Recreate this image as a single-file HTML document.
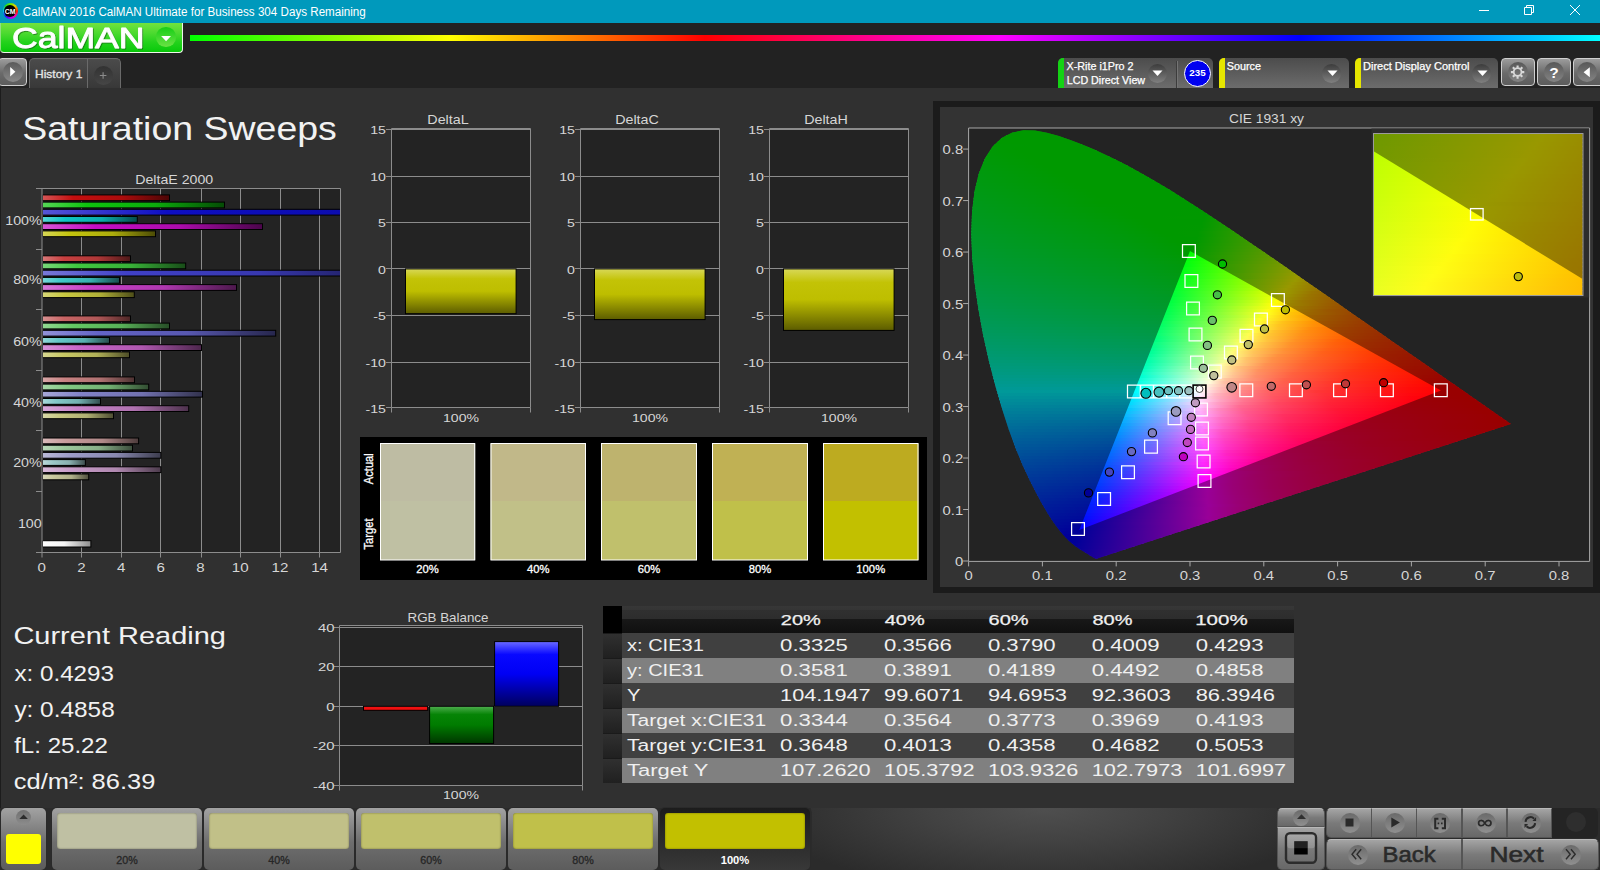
<!DOCTYPE html>
<html lang="en"><head><meta charset="utf-8"><title>CalMAN 2016 - Saturation Sweeps</title>
<style>
html,body{margin:0;padding:0;overflow:hidden}
body{width:1600px;height:870px;overflow:hidden;background:#303030;position:relative;font-family:"Liberation Sans",sans-serif}
.a{position:absolute;box-sizing:border-box}
#titlebar{left:0;top:0;width:1600px;height:23px;background:#0099bc}
#ticon{left:2.5px;top:3.2px;width:15.4px;height:15.4px;border-radius:50%;background:conic-gradient(#6e0 0,#ec0 12%,#f20 25%,#f0a 37%,#a0f 50%,#20f 62%,#0cf 75%,#2d2 88%,#6e0 100%)}
#ticon b{position:absolute;left:1.6px;top:1.6px;width:12.2px;height:12.2px;border-radius:50%;background:#000}
#band{left:0;top:23px;width:1600px;height:65px;background:#222}
#edge{left:0;top:88px;width:1px;height:782px;background:#1c1c1c}
#logo{left:0;top:23px;width:183px;height:30px;border-radius:0 0 4px 4px;background:linear-gradient(#72e23e 0%,#4cda30 35%,#24d21c 65%,#10cc10 90%,#06c406 100%);border:1px solid #eef6ea;border-top:0;border-left-color:#8fe080}
#logo i{left:155.4px;top:4.3px;width:19.6px;height:19.6px;border-radius:50%;background:linear-gradient(#16ce16,#6ae244)}
#rainbow{left:189.7px;top:35px;width:1410.3px;height:6px;background:linear-gradient(90deg,#0f0 0%,#ff0 18.5%,#f00 36.5%,#f0f 57.4%,#00f 78.7%,#0ff 100%)}
.btn{border:1px solid #cfcfcf;border-radius:4px;background:linear-gradient(#9c9c9c,#6a6a6a 55%,#5c5c5c)}
.btn i{position:absolute;border-radius:50%;background:linear-gradient(#585858,#848484)}
#play{left:-2px;top:58px;width:29px;height:28px}
#play i{left:3.6px;top:3px;width:20px;height:20px;background:linear-gradient(#5a5a5a,#8a8a8a)}
#tab{left:29px;top:58px;width:92px;height:30px;border:1px solid #6a6a6a;border-bottom:0;border-radius:5px 5px 0 0;background:linear-gradient(#4b4b4b,#383838)}
#tab b{position:absolute;left:57px;top:0;width:1px;height:29px;background:#6a6a6a}
#tab i{position:absolute;left:63.5px;top:6.5px;width:19.5px;height:19.5px;border-radius:50%;background:linear-gradient(#323232,#464646)}
.dd{top:58px;height:30px;border-radius:5px 5px 0 0;background:linear-gradient(#4c4c4c,#6c6c6c);overflow:hidden}
.dd u{position:absolute;left:0;top:0;width:5.5px;height:30px}
.dd i{position:absolute;top:5.5px;width:19px;height:19px;border-radius:50%;background:linear-gradient(#3c3c3c,#808080)}
.dd s{position:absolute;top:3px;width:1px;height:27px;background:#3c3c3c;box-shadow:1px 0 0 #747474}
#c235{left:1184px;top:60px;width:27px;height:27px;border-radius:50%;background:#0000f0;border:1.5px solid #fff}
.tb{top:58px;height:28px;width:34px}
.tb i{left:6px;top:3px;width:20px;height:20px}

#tbl{left:603px;top:606px;width:691px;height:177px;overflow:hidden}
.th{left:19px;top:0;width:672px;height:27px;background:linear-gradient(#373737 0,#353535 13%,#303030 14%,#2d2d2d 47%,#181818 48%,#101010 100%)}
.tr{left:19px;width:672px;height:25px}
.od{background:#404040}.ev{background:#808080}
.tc0{left:0;top:0;width:19px;height:27px;background:#000}
.tcr{left:0;width:19px;height:25px;background:linear-gradient(#303030,#202020);border-top:1px solid #1a1a1a}

#bbar{left:0;top:808px;width:1600px;height:62px;background:#2b2b2b}
#bbar2{left:811px;top:808px;width:466px;height:62px;background:radial-gradient(ellipse 62% 135% at 50% 0,#4f4f4f 0,#424242 40%,#2b2b2b 100%)}
.bb{top:808px;height:62px;border-radius:5px;background:linear-gradient(#a2a2a2,#6e6e6e 55%,#5c5c5c);box-shadow:0 0 0 1px #2a2a2a}
.bb u{position:absolute;left:5px;top:5px;right:5px;height:36px;border-radius:3px;box-shadow:inset 0 0 2px rgba(0,0,0,.45)}
.bsel{background:linear-gradient(#1c1c1c,#383838)}
.rc{position:absolute;border-radius:50%;background:linear-gradient(#6a6a6a,#909090)}
.sb{background:linear-gradient(#a4a4a4,#7a7a7a 50%,#686868);border:1px solid #555;border-top-color:#b8b8b8}

#app{position:relative;width:1600px;height:870px;overflow:hidden}
#ov{position:absolute;left:0;top:0;width:1600px;height:870px;font-family:"Liberation Sans",sans-serif}
#ov text{white-space:pre}
</style></head>
<body>
<div id="app">
<div id="titlebar" class="a"><div id="ticon" class="a"><b></b></div></div>
<div id="band" class="a"></div>
<div id="edge" class="a"></div>
<div id="logo" class="a"><i class="a"></i></div>
<div id="rainbow" class="a"></div>
<div id="play" class="a btn"><i></i></div>
<div id="tab" class="a"><b></b><i></i></div>
<div class="a dd" style="left:1058px;width:155px"><u style="background:#14d214"></u><i style="left:90px"></i><s style="left:118px"></s></div>
<div id="c235" class="a"></div>
<div class="a dd" style="left:1219px;width:130px"><u style="background:#e6e600"></u><i style="left:103px"></i></div>
<div class="a dd" style="left:1355px;width:143px"><u style="background:#e6e600"></u><i style="left:117px"></i></div>
<div class="a btn tb" style="left:1501px"><i></i></div>
<div class="a btn tb" style="left:1537px"><i></i></div>
<div class="a btn tb" style="left:1573px"><i style="left:3px"></i></div>
<div id="tbl" class="a">
<div class="a th"></div>
<div class="a tr od" style="top:27px"></div>
<div class="a tr ev" style="top:52px"></div>
<div class="a tr od" style="top:77px"></div>
<div class="a tr ev" style="top:102px"></div>
<div class="a tr od" style="top:127px"></div>
<div class="a tr ev" style="top:152px"></div>
<div class="a tc0"></div>
<div class="a tcr" style="top:27px"></div>
<div class="a tcr" style="top:52px"></div>
<div class="a tcr" style="top:77px"></div>
<div class="a tcr" style="top:102px"></div>
<div class="a tcr" style="top:127px"></div>
<div class="a tcr" style="top:152px"></div>
</div>
<div id="bbar" class="a"></div>
<div id="bbar2" class="a"></div>
<div class="a" style="left:0;top:808px;width:812px;height:62px;background:#2b2b2b;border-radius:0 5px 0 0"></div>
<div class="a bb" style="left:1px;width:45px"><i class="rc" style="left:15px;top:2px;width:15px;height:15px;background:linear-gradient(#707070,#8c8c8c)"></i><b class="a" style="left:5px;top:26px;width:35px;height:30px;border-radius:3px;background:#ff0"></b></div>
<div class="a bb" style="left:52px;width:150px"><u style="background:#bfc0a3"></u></div>
<div class="a bb" style="left:204px;width:150px"><u style="background:#c1c088"></u></div>
<div class="a bb" style="left:356px;width:150px"><u style="background:#c0c06c"></u></div>
<div class="a bb" style="left:508px;width:150px"><u style="background:#c0c04a"></u></div>
<div class="a bb bsel" style="left:660px;width:150px"><u style="background:#c2c000"></u></div>
<div class="a sb" style="left:1277px;top:808px;width:48px;height:19px;border-radius:5px 5px 0 0"><i class="rc" style="left:15px;top:1px;width:16px;height:16px"></i></div>
<div class="a sb" style="left:1277px;top:827px;width:48px;height:43px;border-radius:0 0 5px 5px"></div>
<div class="a sb" style="left:1326px;top:808px;width:45.6px;height:30px;border-radius:5px 0 0 5px"><i class="rc" style="left:13px;top:4px;width:20px;height:20px"></i></div>
<div class="a sb" style="left:1371.2px;top:808px;width:45.6px;height:30px;border-radius:0"><i class="rc" style="left:13px;top:4px;width:20px;height:20px"></i></div>
<div class="a sb" style="left:1416.4px;top:808px;width:45.6px;height:30px;border-radius:0"><i class="rc" style="left:13px;top:4px;width:20px;height:20px"></i></div>
<div class="a sb" style="left:1461.6px;top:808px;width:45.6px;height:30px;border-radius:0"><i class="rc" style="left:13px;top:4px;width:20px;height:20px"></i></div>
<div class="a sb" style="left:1506.8px;top:808px;width:45.2px;height:30px;border-radius:0"><i class="rc" style="left:13px;top:4px;width:20px;height:20px"></i></div>
<div class="a" style="left:1552px;top:808px;width:46px;height:30px;background:#242424;border-radius:0 5px 5px 0"><i class="rc" style="left:14px;top:4px;width:20px;height:20px;background:#2e2e2e"></i></div>
<div class="a sb" style="left:1326px;top:839px;width:136px;height:31px;border-radius:5px 0 0 5px"><i class="rc" style="left:21px;top:5px;width:20px;height:20px"></i></div>
<div class="a sb" style="left:1462px;top:839px;width:137px;height:31px;border-radius:0 5px 5px 0"><i class="rc" style="left:98px;top:5px;width:20px;height:20px"></i></div>
<svg id="ov" width="1600" height="870" viewBox="0 0 1600 870">
<defs>
<clipPath id="dec"><rect x="42" y="188.5" width="299" height="364"/></clipPath>
<linearGradient id="e00" gradientUnits="userSpaceOnUse" x1="42.5" x2="170"><stop offset="0" stop-color="#d65656"/><stop offset=".24" stop-color="#c40e0e"/><stop offset=".62" stop-color="#ac0c0c"/><stop offset="1" stop-color="#4a0505"/></linearGradient>
<linearGradient id="e01" gradientUnits="userSpaceOnUse" x1="42.5" x2="225"><stop offset="0" stop-color="#56d656"/><stop offset=".24" stop-color="#0ec40e"/><stop offset=".62" stop-color="#0cac0c"/><stop offset="1" stop-color="#054a05"/></linearGradient>
<linearGradient id="e02" gradientUnits="userSpaceOnUse" x1="42.5" x2="560.6"><stop offset="0" stop-color="#5656d6"/><stop offset=".24" stop-color="#0e0ec4"/><stop offset=".62" stop-color="#0c0cac"/><stop offset="1" stop-color="#05054a"/></linearGradient>
<linearGradient id="e03" gradientUnits="userSpaceOnUse" x1="42.5" x2="137.8"><stop offset="0" stop-color="#56d6d6"/><stop offset=".24" stop-color="#0ec4c4"/><stop offset=".62" stop-color="#0cacac"/><stop offset="1" stop-color="#054a4a"/></linearGradient>
<linearGradient id="e04" gradientUnits="userSpaceOnUse" x1="42.5" x2="263"><stop offset="0" stop-color="#d656d6"/><stop offset=".24" stop-color="#c40ec4"/><stop offset=".62" stop-color="#ac0cac"/><stop offset="1" stop-color="#4a054a"/></linearGradient>
<linearGradient id="e05" gradientUnits="userSpaceOnUse" x1="42.5" x2="156"><stop offset="0" stop-color="#d6d656"/><stop offset=".24" stop-color="#c4c40e"/><stop offset=".62" stop-color="#acac0c"/><stop offset="1" stop-color="#4a4a05"/></linearGradient>
<linearGradient id="e10" gradientUnits="userSpaceOnUse" x1="42.5" x2="131"><stop offset="0" stop-color="#d87979"/><stop offset=".24" stop-color="#c84040"/><stop offset=".62" stop-color="#b03838"/><stop offset="1" stop-color="#4c1818"/></linearGradient>
<linearGradient id="e11" gradientUnits="userSpaceOnUse" x1="42.5" x2="186.2"><stop offset="0" stop-color="#79d879"/><stop offset=".24" stop-color="#40c840"/><stop offset=".62" stop-color="#38b038"/><stop offset="1" stop-color="#184c18"/></linearGradient>
<linearGradient id="e12" gradientUnits="userSpaceOnUse" x1="42.5" x2="392.6"><stop offset="0" stop-color="#7979d8"/><stop offset=".24" stop-color="#4040c8"/><stop offset=".62" stop-color="#3838b0"/><stop offset="1" stop-color="#18184c"/></linearGradient>
<linearGradient id="e13" gradientUnits="userSpaceOnUse" x1="42.5" x2="120"><stop offset="0" stop-color="#79d8d8"/><stop offset=".24" stop-color="#40c8c8"/><stop offset=".62" stop-color="#38b0b0"/><stop offset="1" stop-color="#184c4c"/></linearGradient>
<linearGradient id="e14" gradientUnits="userSpaceOnUse" x1="42.5" x2="237"><stop offset="0" stop-color="#d879d8"/><stop offset=".24" stop-color="#c840c8"/><stop offset=".62" stop-color="#b038b0"/><stop offset="1" stop-color="#4c184c"/></linearGradient>
<linearGradient id="e15" gradientUnits="userSpaceOnUse" x1="42.5" x2="134.8"><stop offset="0" stop-color="#d8d879"/><stop offset=".24" stop-color="#c8c840"/><stop offset=".62" stop-color="#b0b038"/><stop offset="1" stop-color="#4c4c18"/></linearGradient>
<linearGradient id="e20" gradientUnits="userSpaceOnUse" x1="42.5" x2="131"><stop offset="0" stop-color="#d89292"/><stop offset=".24" stop-color="#c86464"/><stop offset=".62" stop-color="#b05858"/><stop offset="1" stop-color="#4c2626"/></linearGradient>
<linearGradient id="e21" gradientUnits="userSpaceOnUse" x1="42.5" x2="170"><stop offset="0" stop-color="#92d892"/><stop offset=".24" stop-color="#64c864"/><stop offset=".62" stop-color="#58b058"/><stop offset="1" stop-color="#264c26"/></linearGradient>
<linearGradient id="e22" gradientUnits="userSpaceOnUse" x1="42.5" x2="276.2"><stop offset="0" stop-color="#9292d8"/><stop offset=".24" stop-color="#6464c8"/><stop offset=".62" stop-color="#5858b0"/><stop offset="1" stop-color="#26264c"/></linearGradient>
<linearGradient id="e23" gradientUnits="userSpaceOnUse" x1="42.5" x2="110"><stop offset="0" stop-color="#92d8d8"/><stop offset=".24" stop-color="#64c8c8"/><stop offset=".62" stop-color="#58b0b0"/><stop offset="1" stop-color="#264c4c"/></linearGradient>
<linearGradient id="e24" gradientUnits="userSpaceOnUse" x1="42.5" x2="202"><stop offset="0" stop-color="#d892d8"/><stop offset=".24" stop-color="#c864c8"/><stop offset=".62" stop-color="#b058b0"/><stop offset="1" stop-color="#4c264c"/></linearGradient>
<linearGradient id="e25" gradientUnits="userSpaceOnUse" x1="42.5" x2="130"><stop offset="0" stop-color="#d8d892"/><stop offset=".24" stop-color="#c8c864"/><stop offset=".62" stop-color="#b0b058"/><stop offset="1" stop-color="#4c4c26"/></linearGradient>
<linearGradient id="e30" gradientUnits="userSpaceOnUse" x1="42.5" x2="135"><stop offset="0" stop-color="#d8a8a8"/><stop offset=".24" stop-color="#c88282"/><stop offset=".62" stop-color="#b07272"/><stop offset="1" stop-color="#4c3131"/></linearGradient>
<linearGradient id="e31" gradientUnits="userSpaceOnUse" x1="42.5" x2="149.2"><stop offset="0" stop-color="#a8d8a8"/><stop offset=".24" stop-color="#82c882"/><stop offset=".62" stop-color="#72b072"/><stop offset="1" stop-color="#314c31"/></linearGradient>
<linearGradient id="e32" gradientUnits="userSpaceOnUse" x1="42.5" x2="203"><stop offset="0" stop-color="#a8a8d8"/><stop offset=".24" stop-color="#8282c8"/><stop offset=".62" stop-color="#7272b0"/><stop offset="1" stop-color="#31314c"/></linearGradient>
<linearGradient id="e33" gradientUnits="userSpaceOnUse" x1="42.5" x2="101"><stop offset="0" stop-color="#a8d8d8"/><stop offset=".24" stop-color="#82c8c8"/><stop offset=".62" stop-color="#72b0b0"/><stop offset="1" stop-color="#314c4c"/></linearGradient>
<linearGradient id="e34" gradientUnits="userSpaceOnUse" x1="42.5" x2="189.2"><stop offset="0" stop-color="#d8a8d8"/><stop offset=".24" stop-color="#c882c8"/><stop offset=".62" stop-color="#b072b0"/><stop offset="1" stop-color="#4c314c"/></linearGradient>
<linearGradient id="e35" gradientUnits="userSpaceOnUse" x1="42.5" x2="114"><stop offset="0" stop-color="#d8d8a8"/><stop offset=".24" stop-color="#c8c882"/><stop offset=".62" stop-color="#b0b072"/><stop offset="1" stop-color="#4c4c31"/></linearGradient>
<linearGradient id="e40" gradientUnits="userSpaceOnUse" x1="42.5" x2="139.1"><stop offset="0" stop-color="#d8baba"/><stop offset=".24" stop-color="#c89c9c"/><stop offset=".62" stop-color="#b08989"/><stop offset="1" stop-color="#4c3b3b"/></linearGradient>
<linearGradient id="e41" gradientUnits="userSpaceOnUse" x1="42.5" x2="133"><stop offset="0" stop-color="#bad8ba"/><stop offset=".24" stop-color="#9cc89c"/><stop offset=".62" stop-color="#89b089"/><stop offset="1" stop-color="#3b4c3b"/></linearGradient>
<linearGradient id="e42" gradientUnits="userSpaceOnUse" x1="42.5" x2="161.4"><stop offset="0" stop-color="#babad8"/><stop offset=".24" stop-color="#9c9cc8"/><stop offset=".62" stop-color="#8989b0"/><stop offset="1" stop-color="#3b3b4c"/></linearGradient>
<linearGradient id="e43" gradientUnits="userSpaceOnUse" x1="42.5" x2="85.9"><stop offset="0" stop-color="#bad8d8"/><stop offset=".24" stop-color="#9cc8c8"/><stop offset=".62" stop-color="#89b0b0"/><stop offset="1" stop-color="#3b4c4c"/></linearGradient>
<linearGradient id="e44" gradientUnits="userSpaceOnUse" x1="42.5" x2="161.4"><stop offset="0" stop-color="#d8bad8"/><stop offset=".24" stop-color="#c89cc8"/><stop offset=".62" stop-color="#b089b0"/><stop offset="1" stop-color="#4c3b4c"/></linearGradient>
<linearGradient id="e45" gradientUnits="userSpaceOnUse" x1="42.5" x2="89.2"><stop offset="0" stop-color="#d8d8ba"/><stop offset=".24" stop-color="#c8c89c"/><stop offset=".62" stop-color="#b0b089"/><stop offset="1" stop-color="#4c4c3b"/></linearGradient>
<linearGradient id="ew" gradientUnits="userSpaceOnUse" x1="42" x2="91.4"><stop offset="0" stop-color="#fff"/><stop offset=".45" stop-color="#f4f4f4"/><stop offset="1" stop-color="#8c8c8c"/></linearGradient>
<linearGradient id="yb" x1="0" y1="0" x2="0" y2="1"><stop offset="0" stop-color="#d8d858"/><stop offset=".22" stop-color="#c3c306"/><stop offset=".5" stop-color="#bebe00"/><stop offset="1" stop-color="#5c5c00"/></linearGradient>
<linearGradient id="gb" x1="0" y1="0" x2="0" y2="1"><stop offset="0" stop-color="#6a6aff"/><stop offset=".2" stop-color="#0808ff"/><stop offset=".5" stop-color="#0000f4"/><stop offset="1" stop-color="#00005c"/></linearGradient>
<linearGradient id="gg" x1="0" y1="0" x2="0" y2="1"><stop offset="0" stop-color="#4fae4f"/><stop offset=".22" stop-color="#068406"/><stop offset=".5" stop-color="#007c00"/><stop offset="1" stop-color="#003600"/></linearGradient>
<clipPath id="loc"><path d="M1097.09 558.44L1097.07 558.43L1097.04 558.42L1096.99 558.44L1096.93 558.46L1096.86 558.46L1096.79 558.45L1096.72 558.45L1096.65 558.47L1096.59 558.5L1096.52 558.52L1096.45 558.53L1096.35 558.53L1096.23 558.53L1096.09 558.52L1095.96 558.52L1095.83 558.52L1095.68 558.51L1095.52 558.49L1095.35 558.45L1095.1 558.36L1094.79 558.25L1094.46 558.1L1094.1 557.91L1093.69 557.7L1093.23 557.44L1092.69 557.13L1092.09 556.78L1091.44 556.37L1090.73 555.9L1089.94 555.39L1089.05 554.83L1088.05 554.21L1086.91 553.52L1085.63 552.73L1084.2 551.86L1082.64 550.9L1080.94 549.84L1079.07 548.63L1077.03 547.24L1074.84 545.66L1072.51 543.85L1069.97 541.68L1067.13 538.95L1063.87 535.46L1060.2 531.15L1056.2 525.97L1051.83 519.73L1047.02 512.2L1041.76 503.15L1035.97 492.46L1029.62 479.98L1022.8 465.43L1015.83 448.68L1008.94 429.76L1002.1 408.64L995.31 385.44L988.89 360.64L983.14 334.9L978.33 308.84L974.63 282.9L972.2 257.75L971.28 234.05L972.03 211.9L974.5 191.53L978.84 173.53L985.02 158.32L992.82 146.29L1002.05 137.78L1012.38 132.6L1023.44 130.34L1034.98 130.61L1046.84 132.73L1058.89 136.04L1070.96 140.17L1082.78 144.77L1094.24 149.6L1105.42 154.66L1116.43 159.99L1127.29 165.57L1138.06 171.39L1148.77 177.44L1159.43 183.69L1170.04 190.12L1180.62 196.7L1191.18 203.42L1201.74 210.26L1212.3 217.2L1222.85 224.23L1233.4 231.32L1243.95 238.47L1254.49 245.66L1265 252.86L1275.49 260.08L1285.93 267.29L1296.32 274.49L1306.63 281.66L1316.86 288.78L1326.98 295.83L1336.97 302.81L1346.81 309.68L1356.49 316.42L1365.99 323.04L1375.26 329.49L1384.29 335.78L1393.06 341.88L1401.55 347.81L1409.67 353.49L1417.33 358.84L1424.52 363.85L1431.35 368.61L1437.89 373.17L1444.07 377.47L1449.8 381.45L1455.06 385.1L1459.93 388.48L1464.43 391.62L1468.56 394.5L1472.35 397.14L1475.79 399.55L1478.93 401.74L1481.8 403.74L1484.42 405.56L1486.82 407.23L1489.01 408.75L1491.04 410.17L1492.95 411.5L1494.72 412.73L1496.36 413.88L1497.86 414.93L1499.25 415.9L1500.52 416.78L1501.67 417.59L1502.69 418.3L1503.59 418.92L1504.38 419.48L1505.11 419.98L1505.76 420.44L1506.35 420.85L1506.87 421.21L1507.32 421.53L1507.69 421.79L1508 422.01L1508.28 422.21L1508.56 422.4L1508.81 422.57L1509.04 422.73L1509.25 422.88L1509.45 423.02L1509.66 423.17L1509.86 423.31L1510.06 423.45L1510.24 423.58L1510.4 423.68L1510.5 423.76L1510.58 423.81L1510.65 423.86L1510.7 423.9L1510.75 423.93L1510.79 423.96L1510.8 423.97L1510.8 423.97Z"/></clipPath>
<linearGradient id="c0" gradientUnits="userSpaceOnUse" x1="1015.5" x2="1042.5"><stop offset="0" stop-color="#00ff00"/><stop offset="1" stop-color="#00ff00"/></linearGradient>
<linearGradient id="c1" gradientUnits="userSpaceOnUse" x1="1005.5" x2="1054.5"><stop offset="0" stop-color="#00ff00"/><stop offset="1" stop-color="#00ff00"/></linearGradient>
<linearGradient id="c2" gradientUnits="userSpaceOnUse" x1="1000.5" x2="1063.5"><stop offset="0" stop-color="#00ff00"/><stop offset="1" stop-color="#00ff00"/></linearGradient>
<linearGradient id="c3" gradientUnits="userSpaceOnUse" x1="996.5" x2="1072.5"><stop offset="0" stop-color="#00ff00"/><stop offset="1" stop-color="#00ff00"/></linearGradient>
<linearGradient id="c4" gradientUnits="userSpaceOnUse" x1="993.5" x2="1081.5"><stop offset="0" stop-color="#00ff01"/><stop offset="1" stop-color="#00ff00"/></linearGradient>
<linearGradient id="c5" gradientUnits="userSpaceOnUse" x1="990.5" x2="1088.5"><stop offset="0" stop-color="#00ff04"/><stop offset=".55" stop-color="#00ff00"/><stop offset="1" stop-color="#00ff00"/></linearGradient>
<linearGradient id="c6" gradientUnits="userSpaceOnUse" x1="988.5" x2="1096.5"><stop offset="0" stop-color="#00ff06"/><stop offset=".31" stop-color="#00ff00"/><stop offset="1" stop-color="#00ff00"/></linearGradient>
<linearGradient id="c7" gradientUnits="userSpaceOnUse" x1="986.5" x2="1101.5"><stop offset="0" stop-color="#00ff09"/><stop offset=".33" stop-color="#00ff00"/><stop offset="1" stop-color="#00ff00"/></linearGradient>
<linearGradient id="c8" gradientUnits="userSpaceOnUse" x1="984.5" x2="1109.5"><stop offset="0" stop-color="#00ff0b"/><stop offset=".35" stop-color="#00ff00"/><stop offset="1" stop-color="#00ff00"/></linearGradient>
<linearGradient id="c9" gradientUnits="userSpaceOnUse" x1="983.5" x2="1115.5"><stop offset="0" stop-color="#00ff0d"/><stop offset=".37" stop-color="#00ff00"/><stop offset="1" stop-color="#00ff00"/></linearGradient>
<linearGradient id="c10" gradientUnits="userSpaceOnUse" x1="981.5" x2="1121.5"><stop offset="0" stop-color="#00ff0f"/><stop offset=".41" stop-color="#00ff00"/><stop offset="1" stop-color="#00ff00"/></linearGradient>
<linearGradient id="c11" gradientUnits="userSpaceOnUse" x1="980.5" x2="1127.5"><stop offset="0" stop-color="#00ff11"/><stop offset=".42" stop-color="#00ff00"/><stop offset="1" stop-color="#00ff00"/></linearGradient>
<linearGradient id="c12" gradientUnits="userSpaceOnUse" x1="978.5" x2="1132.5"><stop offset="0" stop-color="#00ff14"/><stop offset=".45" stop-color="#00ff00"/><stop offset="1" stop-color="#00ff00"/></linearGradient>
<linearGradient id="c13" gradientUnits="userSpaceOnUse" x1="977.5" x2="1138.5"><stop offset="0" stop-color="#00ff16"/><stop offset=".47" stop-color="#00ff00"/><stop offset="1" stop-color="#00ff00"/></linearGradient>
<linearGradient id="c14" gradientUnits="userSpaceOnUse" x1="976.5" x2="1143.5"><stop offset="0" stop-color="#00ff18"/><stop offset=".49" stop-color="#00ff00"/><stop offset="1" stop-color="#00ff00"/></linearGradient>
<linearGradient id="c15" gradientUnits="userSpaceOnUse" x1="975.5" x2="1148.5"><stop offset="0" stop-color="#00ff1a"/><stop offset=".51" stop-color="#00ff00"/><stop offset="1" stop-color="#00ff00"/></linearGradient>
<linearGradient id="c16" gradientUnits="userSpaceOnUse" x1="975.5" x2="1154.5"><stop offset="0" stop-color="#00ff1b"/><stop offset=".53" stop-color="#00ff00"/><stop offset="1" stop-color="#00ff00"/></linearGradient>
<linearGradient id="c17" gradientUnits="userSpaceOnUse" x1="974.5" x2="1159.5"><stop offset="0" stop-color="#00ff1d"/><stop offset=".54" stop-color="#00ff00"/><stop offset="1" stop-color="#00ff00"/></linearGradient>
<linearGradient id="c18" gradientUnits="userSpaceOnUse" x1="973.5" x2="1164.5"><stop offset="0" stop-color="#00ff1f"/><stop offset=".56" stop-color="#00ff00"/><stop offset="1" stop-color="#00ff00"/></linearGradient>
<linearGradient id="c19" gradientUnits="userSpaceOnUse" x1="973.5" x2="1169.5"><stop offset="0" stop-color="#00ff21"/><stop offset=".57" stop-color="#00ff00"/><stop offset="1" stop-color="#00ff00"/></linearGradient>
<linearGradient id="c20" gradientUnits="userSpaceOnUse" x1="972.5" x2="1174.5"><stop offset="0" stop-color="#00ff23"/><stop offset=".59" stop-color="#00ff00"/><stop offset="1" stop-color="#00ff00"/></linearGradient>
<linearGradient id="c21" gradientUnits="userSpaceOnUse" x1="972.5" x2="1179.5"><stop offset="0" stop-color="#00ff25"/><stop offset=".6" stop-color="#00ff00"/><stop offset="1" stop-color="#00ff00"/></linearGradient>
<linearGradient id="c22" gradientUnits="userSpaceOnUse" x1="971.5" x2="1183.5"><stop offset="0" stop-color="#00ff27"/><stop offset=".61" stop-color="#00ff00"/><stop offset="1" stop-color="#00ff00"/></linearGradient>
<linearGradient id="c23" gradientUnits="userSpaceOnUse" x1="971.5" x2="1187.5"><stop offset="0" stop-color="#00ff29"/><stop offset=".62" stop-color="#00ff00"/><stop offset="1" stop-color="#00ff00"/></linearGradient>
<linearGradient id="c24" gradientUnits="userSpaceOnUse" x1="971.5" x2="1193.5"><stop offset="0" stop-color="#00ff2b"/><stop offset=".58" stop-color="#00ff01"/><stop offset="1" stop-color="#00ff00"/></linearGradient>
<linearGradient id="c25" gradientUnits="userSpaceOnUse" x1="971.5" x2="1198.5"><stop offset="0" stop-color="#00ff2d"/><stop offset=".58" stop-color="#00ff02"/><stop offset="1" stop-color="#00ff00"/></linearGradient>
<linearGradient id="c26" gradientUnits="userSpaceOnUse" x1="970.5" x2="1202.5"><stop offset="0" stop-color="#00ff2f"/><stop offset=".59" stop-color="#00ff04"/><stop offset=".77" stop-color="#00ff00"/><stop offset="1" stop-color="#00ff00"/></linearGradient>
<linearGradient id="c27" gradientUnits="userSpaceOnUse" x1="970.5" x2="1207.5"><stop offset="0" stop-color="#00ff31"/><stop offset=".58" stop-color="#00ff05"/><stop offset=".69" stop-color="#00ff00"/><stop offset="1" stop-color="#02ff00"/><stop offset="1" stop-color="#04ff00"/></linearGradient>
<linearGradient id="c28" gradientUnits="userSpaceOnUse" x1="970.5" x2="1211.5"><stop offset="0" stop-color="#00ff33"/><stop offset=".59" stop-color="#00ff06"/><stop offset=".68" stop-color="#00ff00"/><stop offset=".98" stop-color="#02ff00"/><stop offset="1" stop-color="#0eff00"/></linearGradient>
<linearGradient id="c29" gradientUnits="userSpaceOnUse" x1="969.5" x2="1216.5"><stop offset="0" stop-color="#00ff35"/><stop offset=".58" stop-color="#00ff08"/><stop offset=".68" stop-color="#00ff00"/><stop offset=".95" stop-color="#03ff00"/><stop offset="1" stop-color="#18ff00"/></linearGradient>
<linearGradient id="c30" gradientUnits="userSpaceOnUse" x1="969.5" x2="1220.5"><stop offset="0" stop-color="#00ff37"/><stop offset=".58" stop-color="#00ff0a"/><stop offset=".7" stop-color="#00ff00"/><stop offset=".93" stop-color="#01ff00"/><stop offset="1" stop-color="#21ff00"/></linearGradient>
<linearGradient id="c31" gradientUnits="userSpaceOnUse" x1="969.5" x2="1224.5"><stop offset="0" stop-color="#00ff39"/><stop offset=".58" stop-color="#00ff0c"/><stop offset=".7" stop-color="#00ff00"/><stop offset=".91" stop-color="#01ff00"/><stop offset="1" stop-color="#2aff00"/></linearGradient>
<linearGradient id="c32" gradientUnits="userSpaceOnUse" x1="969.5" x2="1230.5"><stop offset="0" stop-color="#00ff3b"/><stop offset=".57" stop-color="#00ff0e"/><stop offset=".7" stop-color="#00ff00"/><stop offset=".89" stop-color="#02ff00"/><stop offset="1" stop-color="#37ff00"/></linearGradient>
<linearGradient id="c33" gradientUnits="userSpaceOnUse" x1="969.5" x2="1234.5"><stop offset="0" stop-color="#00ff3d"/><stop offset=".56" stop-color="#00ff10"/><stop offset=".71" stop-color="#00ff00"/><stop offset=".87" stop-color="#02ff00"/><stop offset="1" stop-color="#40ff00"/></linearGradient>
<linearGradient id="c34" gradientUnits="userSpaceOnUse" x1="969.5" x2="1238.5"><stop offset="0" stop-color="#00ff3f"/><stop offset=".56" stop-color="#00ff11"/><stop offset=".72" stop-color="#00ff00"/><stop offset=".85" stop-color="#03ff00"/><stop offset="1" stop-color="#4aff00"/></linearGradient>
<linearGradient id="c35" gradientUnits="userSpaceOnUse" x1="969.5" x2="1242.5"><stop offset="0" stop-color="#00ff42"/><stop offset=".56" stop-color="#00ff13"/><stop offset=".73" stop-color="#00ff00"/><stop offset=".84" stop-color="#03ff00"/><stop offset="1" stop-color="#53ff00"/></linearGradient>
<linearGradient id="c36" gradientUnits="userSpaceOnUse" x1="969.5" x2="1246.5"><stop offset="0" stop-color="#00ff44"/><stop offset=".55" stop-color="#00ff15"/><stop offset=".74" stop-color="#00ff00"/><stop offset=".82" stop-color="#01ff00"/><stop offset="1" stop-color="#5dff00"/></linearGradient>
<linearGradient id="c37" gradientUnits="userSpaceOnUse" x1="969.5" x2="1251.5"><stop offset="0" stop-color="#00ff46"/><stop offset=".54" stop-color="#00ff18"/><stop offset=".74" stop-color="#00ff00"/><stop offset=".8" stop-color="#02ff00"/><stop offset="1" stop-color="#69ff00"/></linearGradient>
<linearGradient id="c38" gradientUnits="userSpaceOnUse" x1="969.5" x2="1256.5"><stop offset="0" stop-color="#00ff48"/><stop offset=".54" stop-color="#00ff1a"/><stop offset=".75" stop-color="#00ff00"/><stop offset=".78" stop-color="#02ff00"/><stop offset="1" stop-color="#75ff00"/></linearGradient>
<linearGradient id="c39" gradientUnits="userSpaceOnUse" x1="969.5" x2="1260.5"><stop offset="0" stop-color="#00ff4a"/><stop offset=".53" stop-color="#00ff1c"/><stop offset=".76" stop-color="#00ff00"/><stop offset="1" stop-color="#80ff00"/></linearGradient>
<linearGradient id="c40" gradientUnits="userSpaceOnUse" x1="969.5" x2="1264.5"><stop offset="0" stop-color="#00ff4d"/><stop offset=".53" stop-color="#00ff1f"/><stop offset=".75" stop-color="#01ff00"/><stop offset="1" stop-color="#8cff00"/></linearGradient>
<linearGradient id="c41" gradientUnits="userSpaceOnUse" x1="970.5" x2="1269.5"><stop offset="0" stop-color="#00ff4f"/><stop offset=".52" stop-color="#00ff21"/><stop offset=".73" stop-color="#01ff03"/><stop offset=".88" stop-color="#57ff00"/><stop offset="1" stop-color="#99ff00"/></linearGradient>
<linearGradient id="c42" gradientUnits="userSpaceOnUse" x1="970.5" x2="1273.5"><stop offset="0" stop-color="#00ff51"/><stop offset=".51" stop-color="#00ff23"/><stop offset=".72" stop-color="#02ff07"/><stop offset=".78" stop-color="#28ff00"/><stop offset="1" stop-color="#a5ff00"/></linearGradient>
<linearGradient id="c43" gradientUnits="userSpaceOnUse" x1="970.5" x2="1277.5"><stop offset="0" stop-color="#00ff54"/><stop offset=".51" stop-color="#00ff26"/><stop offset=".71" stop-color="#02ff0b"/><stop offset=".79" stop-color="#32ff00"/><stop offset="1" stop-color="#b2ff00"/></linearGradient>
<linearGradient id="c44" gradientUnits="userSpaceOnUse" x1="970.5" x2="1282.5"><stop offset="0" stop-color="#00ff56"/><stop offset=".5" stop-color="#00ff29"/><stop offset=".69" stop-color="#03ff0f"/><stop offset=".79" stop-color="#3eff00"/><stop offset="1" stop-color="#c1ff00"/></linearGradient>
<linearGradient id="c45" gradientUnits="userSpaceOnUse" x1="971.5" x2="1286.5"><stop offset="0" stop-color="#00ff58"/><stop offset=".5" stop-color="#00ff2b"/><stop offset=".68" stop-color="#01ff13"/><stop offset=".79" stop-color="#4bff00"/><stop offset="1" stop-color="#cfff00"/></linearGradient>
<linearGradient id="c46" gradientUnits="userSpaceOnUse" x1="971.5" x2="1291.5"><stop offset="0" stop-color="#00ff5b"/><stop offset=".49" stop-color="#00ff2e"/><stop offset=".66" stop-color="#01ff16"/><stop offset=".8" stop-color="#58ff00"/><stop offset="1" stop-color="#dfff00"/></linearGradient>
<linearGradient id="c47" gradientUnits="userSpaceOnUse" x1="971.5" x2="1295.5"><stop offset="0" stop-color="#00ff5d"/><stop offset=".49" stop-color="#00ff30"/><stop offset=".65" stop-color="#02ff1a"/><stop offset=".81" stop-color="#67ff00"/><stop offset="1" stop-color="#eeff00"/></linearGradient>
<linearGradient id="c48" gradientUnits="userSpaceOnUse" x1="971.5" x2="1299.5"><stop offset="0" stop-color="#00ff60"/><stop offset=".48" stop-color="#00ff33"/><stop offset=".64" stop-color="#02ff1e"/><stop offset=".81" stop-color="#75ff00"/><stop offset="1" stop-color="#fdff00"/></linearGradient>
<linearGradient id="c49" gradientUnits="userSpaceOnUse" x1="972.5" x2="1303.5"><stop offset="0" stop-color="#00ff63"/><stop offset=".48" stop-color="#00ff36"/><stop offset=".63" stop-color="#03ff21"/><stop offset=".82" stop-color="#83ff00"/><stop offset=".98" stop-color="#fffd00"/><stop offset="1" stop-color="#fff100"/></linearGradient>
<linearGradient id="c50" gradientUnits="userSpaceOnUse" x1="972.5" x2="1308.5"><stop offset="0" stop-color="#00ff65"/><stop offset=".47" stop-color="#00ff39"/><stop offset=".61" stop-color="#01ff25"/><stop offset=".82" stop-color="#94ff00"/><stop offset=".96" stop-color="#fffe00"/><stop offset="1" stop-color="#ffe100"/></linearGradient>
<linearGradient id="c51" gradientUnits="userSpaceOnUse" x1="972.5" x2="1312.5"><stop offset="0" stop-color="#00ff68"/><stop offset=".46" stop-color="#00ff3c"/><stop offset=".6" stop-color="#01ff29"/><stop offset=".81" stop-color="#96ff01"/><stop offset=".94" stop-color="#fffc00"/><stop offset="1" stop-color="#ffd300"/></linearGradient>
<linearGradient id="c52" gradientUnits="userSpaceOnUse" x1="972.5" x2="1316.5"><stop offset="0" stop-color="#00ff6b"/><stop offset=".46" stop-color="#00ff3f"/><stop offset=".59" stop-color="#02ff2d"/><stop offset=".81" stop-color="#a1ff03"/><stop offset=".92" stop-color="#fffd00"/><stop offset="1" stop-color="#ffc700"/></linearGradient>
<linearGradient id="c53" gradientUnits="userSpaceOnUse" x1="973.5" x2="1320.5"><stop offset="0" stop-color="#00ff6d"/><stop offset=".46" stop-color="#00ff42"/><stop offset=".58" stop-color="#02ff31"/><stop offset=".81" stop-color="#adff05"/><stop offset=".85" stop-color="#ceff00"/><stop offset=".9" stop-color="#fffe00"/><stop offset=".99" stop-color="#ffc400"/><stop offset="1" stop-color="#ffbc00"/></linearGradient>
<linearGradient id="c54" gradientUnits="userSpaceOnUse" x1="973.5" x2="1325.5"><stop offset="0" stop-color="#00ff70"/><stop offset=".45" stop-color="#00ff45"/><stop offset=".57" stop-color="#03ff35"/><stop offset=".8" stop-color="#b7ff08"/><stop offset=".84" stop-color="#d9ff00"/><stop offset=".89" stop-color="#fffd00"/><stop offset=".96" stop-color="#ffc400"/><stop offset="1" stop-color="#ffaf00"/></linearGradient>
<linearGradient id="c55" gradientUnits="userSpaceOnUse" x1="974.5" x2="1329.5"><stop offset="0" stop-color="#00ff73"/><stop offset=".45" stop-color="#00ff48"/><stop offset=".56" stop-color="#00ff39"/><stop offset=".79" stop-color="#bcff0c"/><stop offset=".85" stop-color="#ecff00"/><stop offset=".87" stop-color="#fffe00"/><stop offset=".94" stop-color="#ffc400"/><stop offset="1" stop-color="#ffa500"/></linearGradient>
<linearGradient id="c56" gradientUnits="userSpaceOnUse" x1="974.5" x2="1333.5"><stop offset="0" stop-color="#00ff76"/><stop offset=".44" stop-color="#00ff4c"/><stop offset=".55" stop-color="#01ff3d"/><stop offset=".79" stop-color="#c4ff10"/><stop offset=".85" stop-color="#ffff00"/><stop offset=".92" stop-color="#ffc600"/><stop offset="1" stop-color="#ff9c00"/></linearGradient>
<linearGradient id="c57" gradientUnits="userSpaceOnUse" x1="975.5" x2="1338.5"><stop offset="0" stop-color="#00ff79"/><stop offset=".44" stop-color="#00ff4f"/><stop offset=".54" stop-color="#02ff41"/><stop offset=".78" stop-color="#cdff13"/><stop offset=".83" stop-color="#fffd03"/><stop offset=".9" stop-color="#ffc400"/><stop offset="1" stop-color="#ff9200"/></linearGradient>
<linearGradient id="c58" gradientUnits="userSpaceOnUse" x1="975.5" x2="1342.5"><stop offset="0" stop-color="#00ff7c"/><stop offset=".43" stop-color="#00ff53"/><stop offset=".53" stop-color="#02ff46"/><stop offset=".77" stop-color="#d3ff18"/><stop offset=".81" stop-color="#fffe0b"/><stop offset=".86" stop-color="#ffd800"/><stop offset=".95" stop-color="#ffa200"/><stop offset="1" stop-color="#ff8900"/></linearGradient>
<linearGradient id="c59" gradientUnits="userSpaceOnUse" x1="976.5" x2="1346.5"><stop offset="0" stop-color="#00ff7f"/><stop offset=".43" stop-color="#00ff56"/><stop offset=".52" stop-color="#03ff4a"/><stop offset=".75" stop-color="#d4ff1d"/><stop offset=".8" stop-color="#fffd11"/><stop offset=".86" stop-color="#ffc800"/><stop offset=".96" stop-color="#ff9300"/><stop offset="1" stop-color="#ff8100"/></linearGradient>
<linearGradient id="c60" gradientUnits="userSpaceOnUse" x1="976.5" x2="1350.5"><stop offset="0" stop-color="#00ff83"/><stop offset=".43" stop-color="#00ff5a"/><stop offset=".51" stop-color="#00ff4f"/><stop offset=".74" stop-color="#d7ff23"/><stop offset=".78" stop-color="#fffe18"/><stop offset=".85" stop-color="#ffc502"/><stop offset=".94" stop-color="#ff9000"/><stop offset="1" stop-color="#ff7a00"/></linearGradient>
<linearGradient id="c61" gradientUnits="userSpaceOnUse" x1="977.5" x2="1355.5"><stop offset="0" stop-color="#00ff86"/><stop offset=".42" stop-color="#00ff5d"/><stop offset=".5" stop-color="#01ff53"/><stop offset=".72" stop-color="#d6ff29"/><stop offset=".77" stop-color="#fffc1e"/><stop offset=".83" stop-color="#ffc308"/><stop offset=".88" stop-color="#ffa800"/><stop offset=".99" stop-color="#ff7600"/><stop offset="1" stop-color="#ff7200"/></linearGradient>
<linearGradient id="c62" gradientUnits="userSpaceOnUse" x1="977.5" x2="1360.5"><stop offset="0" stop-color="#00ff89"/><stop offset=".42" stop-color="#00ff61"/><stop offset=".49" stop-color="#02ff58"/><stop offset=".71" stop-color="#d4ff30"/><stop offset=".75" stop-color="#fffd25"/><stop offset=".81" stop-color="#ffc50f"/><stop offset=".87" stop-color="#ff9e00"/><stop offset=".99" stop-color="#ff6d00"/><stop offset="1" stop-color="#ff6a00"/></linearGradient>
<linearGradient id="c63" gradientUnits="userSpaceOnUse" x1="978.5" x2="1364.5"><stop offset="0" stop-color="#00ff8c"/><stop offset=".41" stop-color="#00ff65"/><stop offset=".48" stop-color="#02ff5c"/><stop offset=".69" stop-color="#d2ff36"/><stop offset=".73" stop-color="#fffe2c"/><stop offset=".8" stop-color="#ffc515"/><stop offset=".88" stop-color="#ff9300"/><stop offset="1" stop-color="#ff6400"/></linearGradient>
<linearGradient id="c64" gradientUnits="userSpaceOnUse" x1="978.5" x2="1367.5"><stop offset="0" stop-color="#00ff90"/><stop offset=".41" stop-color="#00ff69"/><stop offset=".47" stop-color="#03ff61"/><stop offset=".68" stop-color="#d3ff3c"/><stop offset=".72" stop-color="#fffc32"/><stop offset=".78" stop-color="#ffc31a"/><stop offset=".87" stop-color="#ff8e01"/><stop offset="1" stop-color="#ff5f00"/><stop offset="1" stop-color="#ff5e00"/></linearGradient>
<linearGradient id="c65" gradientUnits="userSpaceOnUse" x1="979.5" x2="1372.5"><stop offset="0" stop-color="#00ff93"/><stop offset=".41" stop-color="#00ff6d"/><stop offset=".46" stop-color="#00ff67"/><stop offset=".67" stop-color="#d7ff42"/><stop offset=".7" stop-color="#fffe39"/><stop offset=".76" stop-color="#ffc521"/><stop offset=".85" stop-color="#ff9008"/><stop offset=".9" stop-color="#ff7a00"/><stop offset="1" stop-color="#ff5800"/></linearGradient>
<linearGradient id="c66" gradientUnits="userSpaceOnUse" x1="979.5" x2="1377.5"><stop offset="0" stop-color="#00ff97"/><stop offset=".41" stop-color="#00ff72"/><stop offset=".45" stop-color="#01ff6c"/><stop offset=".65" stop-color="#d5ff49"/><stop offset=".69" stop-color="#fffc3f"/><stop offset=".75" stop-color="#ffc326"/><stop offset=".83" stop-color="#ff8e0c"/><stop offset=".89" stop-color="#ff7300"/><stop offset="1" stop-color="#ff5100"/></linearGradient>
<linearGradient id="c67" gradientUnits="userSpaceOnUse" x1="980.5" x2="1381.5"><stop offset="0" stop-color="#00ff9b"/><stop offset=".4" stop-color="#00ff76"/><stop offset=".44" stop-color="#02ff71"/><stop offset=".64" stop-color="#d4ff50"/><stop offset=".68" stop-color="#fffd47"/><stop offset=".73" stop-color="#ffc32c"/><stop offset=".81" stop-color="#ff8f12"/><stop offset=".9" stop-color="#ff6a00"/><stop offset="1" stop-color="#ff4c00"/></linearGradient>
<linearGradient id="c68" gradientUnits="userSpaceOnUse" x1="981.5" x2="1386.5"><stop offset="0" stop-color="#00ff9f"/><stop offset=".4" stop-color="#00ff7a"/><stop offset=".43" stop-color="#02ff76"/><stop offset=".62" stop-color="#d2ff57"/><stop offset=".66" stop-color="#fffe4f"/><stop offset=".71" stop-color="#ffc633"/><stop offset=".79" stop-color="#ff9118"/><stop offset=".9" stop-color="#ff6300"/><stop offset="1" stop-color="#ff4600"/></linearGradient>
<linearGradient id="c69" gradientUnits="userSpaceOnUse" x1="981.5" x2="1390.5"><stop offset="0" stop-color="#00ffa3"/><stop offset=".4" stop-color="#00ff7f"/><stop offset=".43" stop-color="#03ff7b"/><stop offset=".61" stop-color="#d3ff5e"/><stop offset=".65" stop-color="#fffc55"/><stop offset=".7" stop-color="#ffc438"/><stop offset=".78" stop-color="#ff8f1c"/><stop offset=".89" stop-color="#ff6001"/><stop offset="1" stop-color="#ff4100"/></linearGradient>
<linearGradient id="c70" gradientUnits="userSpaceOnUse" x1="982.5" x2="1395.5"><stop offset="0" stop-color="#00ffa7"/><stop offset=".4" stop-color="#00ff84"/><stop offset=".42" stop-color="#00ff81"/><stop offset=".6" stop-color="#d7ff64"/><stop offset=".63" stop-color="#fffe5d"/><stop offset=".69" stop-color="#ffc43e"/><stop offset=".76" stop-color="#ff9022"/><stop offset=".86" stop-color="#ff6107"/><stop offset=".92" stop-color="#ff5000"/><stop offset="1" stop-color="#ff3c00"/></linearGradient>
<linearGradient id="c71" gradientUnits="userSpaceOnUse" x1="982.5" x2="1399.5"><stop offset="0" stop-color="#00ffab"/><stop offset=".4" stop-color="#00ff89"/><stop offset=".41" stop-color="#04ff87"/><stop offset=".59" stop-color="#d2ff6c"/><stop offset=".62" stop-color="#ffff65"/><stop offset=".67" stop-color="#ffc646"/><stop offset=".74" stop-color="#ff9128"/><stop offset=".84" stop-color="#ff620c"/><stop offset=".91" stop-color="#ff4c00"/><stop offset="1" stop-color="#ff3700"/></linearGradient>
<linearGradient id="c72" gradientUnits="userSpaceOnUse" x1="983.5" x2="1403.5"><stop offset="0" stop-color="#00ffaf"/><stop offset=".4" stop-color="#00ff8d"/><stop offset=".41" stop-color="#08ff8c"/><stop offset=".57" stop-color="#cdff74"/><stop offset=".61" stop-color="#fffd6c"/><stop offset=".66" stop-color="#ffc44b"/><stop offset=".73" stop-color="#ff902d"/><stop offset=".83" stop-color="#ff6110"/><stop offset=".92" stop-color="#ff4600"/><stop offset="1" stop-color="#ff3300"/></linearGradient>
<linearGradient id="c73" gradientUnits="userSpaceOnUse" x1="983.5" x2="1407.5"><stop offset="0" stop-color="#00ffb3"/><stop offset=".4" stop-color="#02ff93"/><stop offset=".56" stop-color="#d1ff7b"/><stop offset=".59" stop-color="#fffe75"/><stop offset=".64" stop-color="#ffc653"/><stop offset=".71" stop-color="#ff9133"/><stop offset=".81" stop-color="#ff6115"/><stop offset=".92" stop-color="#ff4000"/><stop offset="1" stop-color="#ff2e00"/></linearGradient>
<linearGradient id="c74" gradientUnits="userSpaceOnUse" x1="984.5" x2="1411.5"><stop offset="0" stop-color="#00ffb8"/><stop offset=".39" stop-color="#00ff99"/><stop offset=".55" stop-color="#d2ff83"/><stop offset=".58" stop-color="#fffc7c"/><stop offset=".63" stop-color="#ffc459"/><stop offset=".7" stop-color="#ff9139"/><stop offset=".79" stop-color="#ff611a"/><stop offset=".92" stop-color="#ff3a00"/><stop offset="1" stop-color="#ff2a00"/></linearGradient>
<linearGradient id="c75" gradientUnits="userSpaceOnUse" x1="985.5" x2="1415.5"><stop offset="0" stop-color="#00ffbc"/><stop offset=".38" stop-color="#00ffa0"/><stop offset=".54" stop-color="#d7ff8a"/><stop offset=".57" stop-color="#fffe85"/><stop offset=".62" stop-color="#ffc460"/><stop offset=".68" stop-color="#ff903e"/><stop offset=".78" stop-color="#ff601e"/><stop offset=".92" stop-color="#ff3500"/><stop offset="1" stop-color="#ff2600"/></linearGradient>
<linearGradient id="c76" gradientUnits="userSpaceOnUse" x1="985.5" x2="1420.5"><stop offset="0" stop-color="#00ffc1"/><stop offset=".37" stop-color="#01ffa6"/><stop offset=".53" stop-color="#d5ff93"/><stop offset=".56" stop-color="#ffff8e"/><stop offset=".6" stop-color="#ffc467"/><stop offset=".66" stop-color="#ff9144"/><stop offset=".76" stop-color="#ff6124"/><stop offset=".9" stop-color="#ff3604"/><stop offset=".98" stop-color="#ff2500"/><stop offset="1" stop-color="#ff2100"/></linearGradient>
<linearGradient id="c77" gradientUnits="userSpaceOnUse" x1="986.5" x2="1424.5"><stop offset="0" stop-color="#00ffc6"/><stop offset=".37" stop-color="#02ffad"/><stop offset=".52" stop-color="#d3ff9b"/><stop offset=".55" stop-color="#fffd96"/><stop offset=".59" stop-color="#ffc56f"/><stop offset=".65" stop-color="#ff904a"/><stop offset=".74" stop-color="#ff6129"/><stop offset=".88" stop-color="#ff3608"/><stop offset=".94" stop-color="#ff2800"/><stop offset="1" stop-color="#ff1d00"/></linearGradient>
<linearGradient id="c78" gradientUnits="userSpaceOnUse" x1="987.5" x2="1428.5"><stop offset="0" stop-color="#00ffcb"/><stop offset=".36" stop-color="#02ffb4"/><stop offset=".51" stop-color="#d4ffa4"/><stop offset=".53" stop-color="#fffea0"/><stop offset=".58" stop-color="#ffc576"/><stop offset=".63" stop-color="#ff9151"/><stop offset=".72" stop-color="#ff622e"/><stop offset=".85" stop-color="#ff370e"/><stop offset=".94" stop-color="#ff2400"/><stop offset="1" stop-color="#ff1a00"/></linearGradient>
<linearGradient id="c79" gradientUnits="userSpaceOnUse" x1="988.5" x2="1433.5"><stop offset="0" stop-color="#00ffd0"/><stop offset=".35" stop-color="#00ffbc"/><stop offset=".49" stop-color="#d2ffad"/><stop offset=".52" stop-color="#fffca8"/><stop offset=".56" stop-color="#ffc27c"/><stop offset=".62" stop-color="#ff8f56"/><stop offset=".71" stop-color="#ff6032"/><stop offset=".84" stop-color="#ff3510"/><stop offset=".94" stop-color="#ff1f00"/><stop offset="1" stop-color="#ff1600"/></linearGradient>
<linearGradient id="c80" gradientUnits="userSpaceOnUse" x1="989.5" x2="1437.5"><stop offset="0" stop-color="#00ffd5"/><stop offset=".34" stop-color="#00ffc3"/><stop offset=".48" stop-color="#d3ffb6"/><stop offset=".51" stop-color="#fffeb2"/><stop offset=".55" stop-color="#ffc586"/><stop offset=".6" stop-color="#ff915e"/><stop offset=".69" stop-color="#ff6239"/><stop offset=".81" stop-color="#ff3716"/><stop offset=".94" stop-color="#ff1b00"/><stop offset="1" stop-color="#ff1200"/></linearGradient>
<linearGradient id="c81" gradientUnits="userSpaceOnUse" x1="990.5" x2="1441.5"><stop offset="0" stop-color="#00ffda"/><stop offset=".33" stop-color="#00ffcb"/><stop offset=".47" stop-color="#d5ffc0"/><stop offset=".5" stop-color="#ffffbd"/><stop offset=".54" stop-color="#ffc58f"/><stop offset=".59" stop-color="#ff9165"/><stop offset=".67" stop-color="#ff613e"/><stop offset=".79" stop-color="#ff371b"/><stop offset=".95" stop-color="#ff1700"/><stop offset="1" stop-color="#ff0e00"/></linearGradient>
<linearGradient id="c82" gradientUnits="userSpaceOnUse" x1="991.5" x2="1446.5"><stop offset="0" stop-color="#00ffe0"/><stop offset=".33" stop-color="#01ffd3"/><stop offset=".46" stop-color="#d2ffca"/><stop offset=".49" stop-color="#fffdc6"/><stop offset=".53" stop-color="#ffc395"/><stop offset=".58" stop-color="#ff8e69"/><stop offset=".66" stop-color="#ff5f42"/><stop offset=".78" stop-color="#ff351e"/><stop offset=".95" stop-color="#ff1200"/><stop offset="1" stop-color="#ff0a00"/></linearGradient>
<linearGradient id="c83" gradientUnits="userSpaceOnUse" x1="991.5" x2="1449.5"><stop offset="0" stop-color="#00ffe6"/><stop offset=".32" stop-color="#02ffdb"/><stop offset=".45" stop-color="#d4ffd4"/><stop offset=".48" stop-color="#ffffd2"/><stop offset=".51" stop-color="#ffc6a1"/><stop offset=".57" stop-color="#ff9173"/><stop offset=".64" stop-color="#ff6149"/><stop offset=".76" stop-color="#ff3724"/><stop offset=".95" stop-color="#ff0e00"/><stop offset="1" stop-color="#ff0700"/></linearGradient>
<linearGradient id="c84" gradientUnits="userSpaceOnUse" x1="992.5" x2="1454.5"><stop offset="0" stop-color="#00ffec"/><stop offset=".31" stop-color="#00ffe4"/><stop offset=".44" stop-color="#cdffdf"/><stop offset=".47" stop-color="#fffcdb"/><stop offset=".5" stop-color="#ffc3a7"/><stop offset=".55" stop-color="#ff8f78"/><stop offset=".63" stop-color="#ff5f4d"/><stop offset=".74" stop-color="#ff3527"/><stop offset=".94" stop-color="#ff0c00"/><stop offset="1" stop-color="#ff0300"/></linearGradient>
<linearGradient id="c85" gradientUnits="userSpaceOnUse" x1="993.5" x2="1459.5"><stop offset="0" stop-color="#00fff2"/><stop offset=".31" stop-color="#00ffed"/><stop offset=".43" stop-color="#d3ffea"/><stop offset=".45" stop-color="#fffee8"/><stop offset=".49" stop-color="#ffc6b4"/><stop offset=".54" stop-color="#ff9182"/><stop offset=".61" stop-color="#ff6256"/><stop offset=".72" stop-color="#ff372e"/><stop offset=".9" stop-color="#ff0f07"/><stop offset=".97" stop-color="#ff0300"/><stop offset="1" stop-color="#ff0000"/></linearGradient>
<linearGradient id="c86" gradientUnits="userSpaceOnUse" x1="994.5" x2="1462.5"><stop offset="0" stop-color="#00fff8"/><stop offset=".3" stop-color="#00fff6"/><stop offset=".42" stop-color="#d4fff5"/><stop offset=".44" stop-color="#fffff5"/><stop offset=".48" stop-color="#ffc3bb"/><stop offset=".53" stop-color="#ff8f88"/><stop offset=".6" stop-color="#ff605b"/><stop offset=".71" stop-color="#ff3531"/><stop offset=".89" stop-color="#ff0c09"/><stop offset=".97" stop-color="#ff0000"/><stop offset="1" stop-color="#ff0000"/></linearGradient>
<linearGradient id="c87" gradientUnits="userSpaceOnUse" x1="994.5" x2="1467.5"><stop offset="0" stop-color="#00ffff"/><stop offset=".3" stop-color="#01feff"/><stop offset=".41" stop-color="#d4fdff"/><stop offset=".43" stop-color="#fffdff"/><stop offset=".47" stop-color="#ffc3c5"/><stop offset=".51" stop-color="#ff9091"/><stop offset=".58" stop-color="#ff6162"/><stop offset=".68" stop-color="#ff3637"/><stop offset=".86" stop-color="#ff0e0f"/><stop offset=".96" stop-color="#ff0000"/><stop offset="1" stop-color="#ff0000"/></linearGradient>
<linearGradient id="c88" gradientUnits="userSpaceOnUse" x1="995.5" x2="1472.5"><stop offset="0" stop-color="#00f8ff"/><stop offset=".29" stop-color="#02f4ff"/><stop offset=".41" stop-color="#d4f2ff"/><stop offset=".43" stop-color="#fef1ff"/><stop offset=".46" stop-color="#ffb8c4"/><stop offset=".51" stop-color="#ff868f"/><stop offset=".58" stop-color="#ff5961"/><stop offset=".69" stop-color="#ff2f36"/><stop offset=".87" stop-color="#ff080e"/><stop offset=".94" stop-color="#ff0002"/><stop offset="1" stop-color="#ff0000"/></linearGradient>
<linearGradient id="c89" gradientUnits="userSpaceOnUse" x1="996.5" x2="1476.5"><stop offset="0" stop-color="#00f2ff"/><stop offset=".28" stop-color="#00ebff"/><stop offset=".4" stop-color="#d0e6ff"/><stop offset=".42" stop-color="#ffe3fc"/><stop offset=".46" stop-color="#ffadc2"/><stop offset=".51" stop-color="#ff7e8f"/><stop offset=".58" stop-color="#ff5260"/><stop offset=".69" stop-color="#ff2a36"/><stop offset=".87" stop-color="#ff030d"/><stop offset=".97" stop-color="#ff0000"/><stop offset="1" stop-color="#ff0000"/></linearGradient>
<linearGradient id="c90" gradientUnits="userSpaceOnUse" x1="997.5" x2="1480.5"><stop offset="0" stop-color="#00ebff"/><stop offset=".28" stop-color="#00e2ff"/><stop offset=".4" stop-color="#d4dcff"/><stop offset=".42" stop-color="#ffd8fd"/><stop offset=".46" stop-color="#ffa5c4"/><stop offset=".51" stop-color="#ff7690"/><stop offset=".58" stop-color="#ff4c60"/><stop offset=".69" stop-color="#ff2536"/><stop offset=".87" stop-color="#ff000d"/><stop offset=".98" stop-color="#ff0000"/><stop offset="1" stop-color="#ff0000"/></linearGradient>
<linearGradient id="c91" gradientUnits="userSpaceOnUse" x1="998.5" x2="1485.5"><stop offset="0" stop-color="#00e5ff"/><stop offset=".27" stop-color="#00daff"/><stop offset=".39" stop-color="#d8d1ff"/><stop offset=".41" stop-color="#ffcefe"/><stop offset=".45" stop-color="#ff9ec5"/><stop offset=".5" stop-color="#ff7191"/><stop offset=".57" stop-color="#ff4762"/><stop offset=".68" stop-color="#ff2237"/><stop offset=".85" stop-color="#ff0011"/><stop offset=".98" stop-color="#ff0000"/><stop offset="1" stop-color="#ff0000"/></linearGradient>
<linearGradient id="c92" gradientUnits="userSpaceOnUse" x1="999.5" x2="1488.5"><stop offset="0" stop-color="#00dfff"/><stop offset=".26" stop-color="#01d1ff"/><stop offset=".39" stop-color="#d5c7ff"/><stop offset=".41" stop-color="#ffc4ff"/><stop offset=".45" stop-color="#ff96c7"/><stop offset=".49" stop-color="#ff6b93"/><stop offset=".57" stop-color="#ff4364"/><stop offset=".68" stop-color="#ff1e38"/><stop offset=".83" stop-color="#ff0015"/><stop offset=".98" stop-color="#ff0000"/><stop offset="1" stop-color="#ff0000"/></linearGradient>
<linearGradient id="c93" gradientUnits="userSpaceOnUse" x1="1000.5" x2="1494.5"><stop offset="0" stop-color="#00d8ff"/><stop offset=".26" stop-color="#02c9ff"/><stop offset=".38" stop-color="#d5bdff"/><stop offset=".4" stop-color="#febaff"/><stop offset=".44" stop-color="#ff8ac3"/><stop offset=".49" stop-color="#ff6190"/><stop offset=".57" stop-color="#ff3b60"/><stop offset=".68" stop-color="#ff1735"/><stop offset=".81" stop-color="#ff0019"/><stop offset=".98" stop-color="#ff0000"/><stop offset="1" stop-color="#ff0000"/></linearGradient>
<linearGradient id="c94" gradientUnits="userSpaceOnUse" x1="1001.5" x2="1498.5"><stop offset="0" stop-color="#00d2ff"/><stop offset=".25" stop-color="#03c2ff"/><stop offset=".38" stop-color="#d5b3ff"/><stop offset=".4" stop-color="#ffaefc"/><stop offset=".44" stop-color="#ff83c5"/><stop offset=".49" stop-color="#ff5a90"/><stop offset=".57" stop-color="#ff3661"/><stop offset=".68" stop-color="#ff1436"/><stop offset=".78" stop-color="#ff001e"/><stop offset=".98" stop-color="#ff0000"/><stop offset="1" stop-color="#ff0000"/></linearGradient>
<linearGradient id="c95" gradientUnits="userSpaceOnUse" x1="1002.5" x2="1502.5"><stop offset="0" stop-color="#00ccff"/><stop offset=".24" stop-color="#00baff"/><stop offset=".37" stop-color="#d5aaff"/><stop offset=".4" stop-color="#ffa5fd"/><stop offset=".44" stop-color="#ff7ac3"/><stop offset=".49" stop-color="#ff5490"/><stop offset=".56" stop-color="#ff3061"/><stop offset=".68" stop-color="#ff0f36"/><stop offset=".76" stop-color="#ff0022"/><stop offset=".99" stop-color="#ff0000"/><stop offset="1" stop-color="#ff0000"/></linearGradient>
<linearGradient id="c96" gradientUnits="userSpaceOnUse" x1="1002.5" x2="1507.5"><stop offset="0" stop-color="#00c7ff"/><stop offset=".24" stop-color="#00b3ff"/><stop offset=".37" stop-color="#d8a1ff"/><stop offset=".39" stop-color="#ff9dfe"/><stop offset=".43" stop-color="#ff74c5"/><stop offset=".49" stop-color="#ff4e90"/><stop offset=".56" stop-color="#ff2b60"/><stop offset=".68" stop-color="#ff0a35"/><stop offset=".74" stop-color="#ff0026"/><stop offset=".98" stop-color="#ff0000"/><stop offset="1" stop-color="#ff0000"/></linearGradient>
<linearGradient id="c97" gradientUnits="userSpaceOnUse" x1="1003.5" x2="1511.5"><stop offset="0" stop-color="#00c1ff"/><stop offset=".23" stop-color="#01acff"/><stop offset=".37" stop-color="#d599ff"/><stop offset=".39" stop-color="#ff94ff"/><stop offset=".43" stop-color="#ff6dc6"/><stop offset=".48" stop-color="#ff4991"/><stop offset=".56" stop-color="#ff2762"/><stop offset=".68" stop-color="#ff0737"/><stop offset=".73" stop-color="#ff002a"/><stop offset=".98" stop-color="#ff0000"/><stop offset="1" stop-color="#ff0000"/></linearGradient>
<linearGradient id="c98" gradientUnits="userSpaceOnUse" x1="1004.5" x2="1512.5"><stop offset="0" stop-color="#00bbff"/><stop offset=".23" stop-color="#01a5ff"/><stop offset=".36" stop-color="#d590ff"/><stop offset=".39" stop-color="#ff89fc"/><stop offset=".43" stop-color="#ff63c3"/><stop offset=".48" stop-color="#ff408e"/><stop offset=".56" stop-color="#ff205f"/><stop offset=".69" stop-color="#ff0034"/><stop offset=".9" stop-color="#ff000c"/><stop offset="1" stop-color="#ff0000"/></linearGradient>
<linearGradient id="c99" gradientUnits="userSpaceOnUse" x1="1005.5" x2="1503.5"><stop offset="0" stop-color="#00b5ff"/><stop offset=".23" stop-color="#029eff"/><stop offset=".37" stop-color="#d588ff"/><stop offset=".4" stop-color="#ff81fd"/><stop offset=".44" stop-color="#ff5dc4"/><stop offset=".49" stop-color="#ff3c90"/><stop offset=".57" stop-color="#ff1c61"/><stop offset=".69" stop-color="#ff0037"/><stop offset=".9" stop-color="#ff000f"/><stop offset="1" stop-color="#ff0001"/></linearGradient>
<linearGradient id="c100" gradientUnits="userSpaceOnUse" x1="1006.5" x2="1494.5"><stop offset="0" stop-color="#00b0ff"/><stop offset=".23" stop-color="#0398ff"/><stop offset=".38" stop-color="#d580ff"/><stop offset=".4" stop-color="#ff79fd"/><stop offset=".44" stop-color="#ff57c5"/><stop offset=".5" stop-color="#ff3792"/><stop offset=".58" stop-color="#ff1862"/><stop offset=".69" stop-color="#ff003d"/><stop offset=".89" stop-color="#ff0015"/><stop offset="1" stop-color="#ff0005"/></linearGradient>
<linearGradient id="c101" gradientUnits="userSpaceOnUse" x1="1007.5" x2="1484.5"><stop offset="0" stop-color="#00aaff"/><stop offset=".23" stop-color="#0092ff"/><stop offset=".38" stop-color="#d578ff"/><stop offset=".41" stop-color="#ff72fe"/><stop offset=".45" stop-color="#ff4fc4"/><stop offset=".51" stop-color="#ff3090"/><stop offset=".6" stop-color="#ff1361"/><stop offset=".69" stop-color="#ff0043"/><stop offset=".88" stop-color="#ff001b"/><stop offset="1" stop-color="#ff0009"/></linearGradient>
<linearGradient id="c102" gradientUnits="userSpaceOnUse" x1="1008.5" x2="1475.5"><stop offset="0" stop-color="#00a5ff"/><stop offset=".23" stop-color="#008cff"/><stop offset=".39" stop-color="#d870ff"/><stop offset=".42" stop-color="#ff6aff"/><stop offset=".46" stop-color="#ff49c5"/><stop offset=".52" stop-color="#ff2b92"/><stop offset=".61" stop-color="#ff0e62"/><stop offset=".69" stop-color="#ff0049"/><stop offset=".87" stop-color="#ff0020"/><stop offset="1" stop-color="#ff000d"/></linearGradient>
<linearGradient id="c103" gradientUnits="userSpaceOnUse" x1="1010.5" x2="1466.5"><stop offset="0" stop-color="#009fff"/><stop offset=".23" stop-color="#0186ff"/><stop offset=".39" stop-color="#d569ff"/><stop offset=".42" stop-color="#ff61fc"/><stop offset=".47" stop-color="#ff41c2"/><stop offset=".54" stop-color="#ff248f"/><stop offset=".63" stop-color="#ff0860"/><stop offset=".68" stop-color="#ff004e"/><stop offset=".86" stop-color="#ff0025"/><stop offset="1" stop-color="#ff0011"/></linearGradient>
<linearGradient id="c104" gradientUnits="userSpaceOnUse" x1="1011.5" x2="1457.5"><stop offset="0" stop-color="#009aff"/><stop offset=".23" stop-color="#0280ff"/><stop offset=".4" stop-color="#d562ff"/><stop offset=".43" stop-color="#ff5afd"/><stop offset=".48" stop-color="#ff3bc3"/><stop offset=".55" stop-color="#ff1f8f"/><stop offset=".65" stop-color="#ff035f"/><stop offset=".8" stop-color="#ff0035"/><stop offset="1" stop-color="#ff0015"/></linearGradient>
<linearGradient id="c105" gradientUnits="userSpaceOnUse" x1="1012.5" x2="1448.5"><stop offset="0" stop-color="#0095ff"/><stop offset=".23" stop-color="#037aff"/><stop offset=".41" stop-color="#d55bff"/><stop offset=".44" stop-color="#ff53fe"/><stop offset=".49" stop-color="#ff36c5"/><stop offset=".56" stop-color="#ff1a90"/><stop offset=".66" stop-color="#ff0061"/><stop offset=".82" stop-color="#ff0036"/><stop offset="1" stop-color="#ff0019"/></linearGradient>
<linearGradient id="c106" gradientUnits="userSpaceOnUse" x1="1013.5" x2="1439.5"><stop offset="0" stop-color="#0090ff"/><stop offset=".23" stop-color="#0075ff"/><stop offset=".41" stop-color="#d554ff"/><stop offset=".45" stop-color="#ff4cfe"/><stop offset=".5" stop-color="#ff30c6"/><stop offset=".57" stop-color="#ff1692"/><stop offset=".66" stop-color="#ff0067"/><stop offset=".82" stop-color="#ff003c"/><stop offset="1" stop-color="#ff001d"/></linearGradient>
<linearGradient id="c107" gradientUnits="userSpaceOnUse" x1="1014.5" x2="1429.5"><stop offset="0" stop-color="#008bff"/><stop offset=".23" stop-color="#006fff"/><stop offset=".42" stop-color="#d84cff"/><stop offset=".46" stop-color="#ff43fc"/><stop offset=".51" stop-color="#ff29c3"/><stop offset=".59" stop-color="#ff0f8f"/><stop offset=".66" stop-color="#ff006f"/><stop offset=".81" stop-color="#ff0043"/><stop offset="1" stop-color="#ff0021"/></linearGradient>
<linearGradient id="c108" gradientUnits="userSpaceOnUse" x1="1015.5" x2="1420.5"><stop offset="0" stop-color="#0086ff"/><stop offset=".23" stop-color="#016aff"/><stop offset=".43" stop-color="#d546ff"/><stop offset=".47" stop-color="#ff3dfc"/><stop offset=".52" stop-color="#ff23c4"/><stop offset=".6" stop-color="#ff0a8f"/><stop offset=".66" stop-color="#ff0077"/><stop offset=".8" stop-color="#ff004a"/><stop offset="1" stop-color="#ff0025"/></linearGradient>
<linearGradient id="c109" gradientUnits="userSpaceOnUse" x1="1017.5" x2="1411.5"><stop offset="0" stop-color="#0080ff"/><stop offset=".23" stop-color="#0265ff"/><stop offset=".44" stop-color="#d540ff"/><stop offset=".47" stop-color="#ff36fd"/><stop offset=".54" stop-color="#ff1dc3"/><stop offset=".62" stop-color="#ff048f"/><stop offset=".67" stop-color="#ff0079"/><stop offset=".82" stop-color="#ff004c"/><stop offset="1" stop-color="#ff002a"/></linearGradient>
<linearGradient id="c110" gradientUnits="userSpaceOnUse" x1="1018.5" x2="1402.5"><stop offset="0" stop-color="#007bff"/><stop offset=".23" stop-color="#0260ff"/><stop offset=".45" stop-color="#d539ff"/><stop offset=".48" stop-color="#ff30fe"/><stop offset=".55" stop-color="#ff17c4"/><stop offset=".63" stop-color="#ff0090"/><stop offset=".76" stop-color="#ff0061"/><stop offset=".96" stop-color="#ff0036"/><stop offset="1" stop-color="#ff002f"/></linearGradient>
<linearGradient id="c111" gradientUnits="userSpaceOnUse" x1="1019.5" x2="1393.5"><stop offset="0" stop-color="#0077ff"/><stop offset=".23" stop-color="#035bff"/><stop offset=".45" stop-color="#d533ff"/><stop offset=".49" stop-color="#ff29fe"/><stop offset=".56" stop-color="#ff12c5"/><stop offset=".63" stop-color="#ff0098"/><stop offset=".76" stop-color="#ff0068"/><stop offset=".94" stop-color="#ff003d"/><stop offset="1" stop-color="#ff0033"/></linearGradient>
<linearGradient id="c112" gradientUnits="userSpaceOnUse" x1="1020.5" x2="1384.5"><stop offset="0" stop-color="#0072ff"/><stop offset=".23" stop-color="#0056ff"/><stop offset=".47" stop-color="#d82cff"/><stop offset=".51" stop-color="#ff22fc"/><stop offset=".58" stop-color="#ff0bc2"/><stop offset=".63" stop-color="#ff00a3"/><stop offset=".75" stop-color="#ff0072"/><stop offset=".93" stop-color="#ff0045"/><stop offset="1" stop-color="#ff0038"/></linearGradient>
<linearGradient id="c113" gradientUnits="userSpaceOnUse" x1="1022.5" x2="1374.5"><stop offset="0" stop-color="#006dff"/><stop offset=".23" stop-color="#0152ff"/><stop offset=".48" stop-color="#d826ff"/><stop offset=".52" stop-color="#ff1bfd"/><stop offset=".59" stop-color="#ff05c3"/><stop offset=".63" stop-color="#ff00aa"/><stop offset=".75" stop-color="#ff0078"/><stop offset=".93" stop-color="#ff004b"/><stop offset="1" stop-color="#ff003e"/></linearGradient>
<linearGradient id="c114" gradientUnits="userSpaceOnUse" x1="1023.5" x2="1365.5"><stop offset="0" stop-color="#0068ff"/><stop offset=".23" stop-color="#014dff"/><stop offset=".49" stop-color="#d520ff"/><stop offset=".53" stop-color="#ff15fd"/><stop offset=".61" stop-color="#ff00c4"/><stop offset=".71" stop-color="#ff0091"/><stop offset=".86" stop-color="#ff0061"/><stop offset="1" stop-color="#ff0044"/></linearGradient>
<linearGradient id="c115" gradientUnits="userSpaceOnUse" x1="1025.5" x2="1356.5"><stop offset="0" stop-color="#0063ff"/><stop offset=".23" stop-color="#0248ff"/><stop offset=".5" stop-color="#d51aff"/><stop offset=".54" stop-color="#ff0efe"/><stop offset=".6" stop-color="#ff00d1"/><stop offset=".7" stop-color="#ff009c"/><stop offset=".85" stop-color="#ff006b"/><stop offset="1" stop-color="#ff004a"/></linearGradient>
<linearGradient id="c116" gradientUnits="userSpaceOnUse" x1="1026.5" x2="1347.5"><stop offset="0" stop-color="#005eff"/><stop offset=".23" stop-color="#0344ff"/><stop offset=".5" stop-color="#d015ff"/><stop offset=".56" stop-color="#ff07fe"/><stop offset=".6" stop-color="#ff00df"/><stop offset=".69" stop-color="#ff00a8"/><stop offset=".83" stop-color="#ff0076"/><stop offset="1" stop-color="#ff0050"/></linearGradient>
<linearGradient id="c117" gradientUnits="userSpaceOnUse" x1="1027.5" x2="1338.5"><stop offset="0" stop-color="#005aff"/><stop offset=".23" stop-color="#0340ff"/><stop offset=".5" stop-color="#c811ff"/><stop offset=".58" stop-color="#ff00fc"/><stop offset=".66" stop-color="#ff00c4"/><stop offset=".78" stop-color="#ff008f"/><stop offset=".95" stop-color="#ff0060"/><stop offset="1" stop-color="#ff0056"/></linearGradient>
<linearGradient id="c118" gradientUnits="userSpaceOnUse" x1="1029.5" x2="1328.5"><stop offset="0" stop-color="#0055ff"/><stop offset=".23" stop-color="#013cff"/><stop offset=".51" stop-color="#c10eff"/><stop offset=".58" stop-color="#f400ff"/><stop offset=".59" stop-color="#ff00fd"/><stop offset=".68" stop-color="#ff00c3"/><stop offset=".81" stop-color="#ff008e"/><stop offset=".99" stop-color="#ff005f"/><stop offset="1" stop-color="#ff005e"/></linearGradient>
<linearGradient id="c119" gradientUnits="userSpaceOnUse" x1="1030.5" x2="1319.5"><stop offset="0" stop-color="#0050ff"/><stop offset=".23" stop-color="#0137ff"/><stop offset=".51" stop-color="#b80aff"/><stop offset=".56" stop-color="#df00ff"/><stop offset=".61" stop-color="#ff00fd"/><stop offset=".7" stop-color="#ff00c4"/><stop offset=".83" stop-color="#ff0090"/><stop offset="1" stop-color="#ff0065"/></linearGradient>
<linearGradient id="c120" gradientUnits="userSpaceOnUse" x1="1032.5" x2="1310.5"><stop offset="0" stop-color="#004cff"/><stop offset=".23" stop-color="#0233ff"/><stop offset=".51" stop-color="#b106ff"/><stop offset=".56" stop-color="#d300ff"/><stop offset=".63" stop-color="#ff00fe"/><stop offset=".72" stop-color="#ff00c5"/><stop offset=".86" stop-color="#ff0091"/><stop offset="1" stop-color="#ff006d"/></linearGradient>
<linearGradient id="c121" gradientUnits="userSpaceOnUse" x1="1033.5" x2="1301.5"><stop offset="0" stop-color="#0047ff"/><stop offset=".23" stop-color="#022fff"/><stop offset=".51" stop-color="#a604ff"/><stop offset=".57" stop-color="#d000ff"/><stop offset=".65" stop-color="#ff00fc"/><stop offset=".75" stop-color="#ff00c3"/><stop offset=".9" stop-color="#ff008f"/><stop offset="1" stop-color="#ff0075"/></linearGradient>
<linearGradient id="c122" gradientUnits="userSpaceOnUse" x1="1035.5" x2="1292.5"><stop offset="0" stop-color="#0042ff"/><stop offset=".23" stop-color="#032bff"/><stop offset=".5" stop-color="#9c02ff"/><stop offset=".67" stop-color="#ff00fc"/><stop offset=".78" stop-color="#ff00c3"/><stop offset=".93" stop-color="#ff0090"/><stop offset="1" stop-color="#ff007e"/></linearGradient>
<linearGradient id="c123" gradientUnits="userSpaceOnUse" x1="1036.5" x2="1283.5"><stop offset="0" stop-color="#003eff"/><stop offset=".22" stop-color="#0027ff"/><stop offset=".51" stop-color="#9a00ff"/><stop offset=".69" stop-color="#ff00fd"/><stop offset=".81" stop-color="#ff00c4"/><stop offset=".97" stop-color="#ff0090"/><stop offset="1" stop-color="#ff0088"/></linearGradient>
<linearGradient id="c124" gradientUnits="userSpaceOnUse" x1="1038.5" x2="1273.5"><stop offset="0" stop-color="#0039ff"/><stop offset=".22" stop-color="#0124ff"/><stop offset=".5" stop-color="#8900ff"/><stop offset=".72" stop-color="#ff00fd"/><stop offset=".84" stop-color="#ff00c4"/><stop offset="1" stop-color="#ff0093"/></linearGradient>
<linearGradient id="c125" gradientUnits="userSpaceOnUse" x1="1040.5" x2="1264.5"><stop offset="0" stop-color="#0034ff"/><stop offset=".22" stop-color="#0120ff"/><stop offset=".48" stop-color="#7c00ff"/><stop offset=".75" stop-color="#ff00fe"/><stop offset=".88" stop-color="#ff00c5"/><stop offset="1" stop-color="#ff009e"/></linearGradient>
<linearGradient id="c126" gradientUnits="userSpaceOnUse" x1="1042.5" x2="1255.5"><stop offset="0" stop-color="#0030ff"/><stop offset=".22" stop-color="#021cff"/><stop offset=".46" stop-color="#6c00ff"/><stop offset=".76" stop-color="#f800ff"/><stop offset=".78" stop-color="#ff00fa"/><stop offset=".92" stop-color="#ff00c1"/><stop offset="1" stop-color="#ff00aa"/></linearGradient>
<linearGradient id="c127" gradientUnits="userSpaceOnUse" x1="1044.5" x2="1246.5"><stop offset="0" stop-color="#002bff"/><stop offset=".21" stop-color="#0218ff"/><stop offset=".44" stop-color="#5e00ff"/><stop offset=".77" stop-color="#ec00ff"/><stop offset=".81" stop-color="#ff00fd"/><stop offset=".96" stop-color="#ff00c3"/><stop offset="1" stop-color="#ff00b7"/></linearGradient>
<linearGradient id="c128" gradientUnits="userSpaceOnUse" x1="1046.5" x2="1237.5"><stop offset="0" stop-color="#0026ff"/><stop offset=".21" stop-color="#0314ff"/><stop offset=".41" stop-color="#4f00ff"/><stop offset=".78" stop-color="#e300ff"/><stop offset=".85" stop-color="#ff00fd"/><stop offset="1" stop-color="#ff00c6"/></linearGradient>
<linearGradient id="c129" gradientUnits="userSpaceOnUse" x1="1047.5" x2="1227.5"><stop offset="0" stop-color="#0022ff"/><stop offset=".21" stop-color="#0111ff"/><stop offset=".39" stop-color="#4300ff"/><stop offset=".8" stop-color="#da00ff"/><stop offset=".89" stop-color="#ff00fe"/><stop offset="1" stop-color="#ff00d7"/></linearGradient>
<linearGradient id="c130" gradientUnits="userSpaceOnUse" x1="1049.5" x2="1218.5"><stop offset="0" stop-color="#001dff"/><stop offset=".2" stop-color="#010dff"/><stop offset=".36" stop-color="#3800ff"/><stop offset=".82" stop-color="#d300ff"/><stop offset=".95" stop-color="#ff00fc"/><stop offset="1" stop-color="#ff00e9"/></linearGradient>
<linearGradient id="c131" gradientUnits="userSpaceOnUse" x1="1052.5" x2="1209.5"><stop offset="0" stop-color="#0018ff"/><stop offset=".19" stop-color="#0209ff"/><stop offset=".32" stop-color="#2c00ff"/><stop offset=".85" stop-color="#cf00ff"/><stop offset="1" stop-color="#ff00fc"/></linearGradient>
<linearGradient id="c132" gradientUnits="userSpaceOnUse" x1="1054.5" x2="1200.5"><stop offset="0" stop-color="#0013ff"/><stop offset=".18" stop-color="#0205ff"/><stop offset=".32" stop-color="#2800ff"/><stop offset=".9" stop-color="#cd00ff"/><stop offset="1" stop-color="#ed00ff"/></linearGradient>
<linearGradient id="c133" gradientUnits="userSpaceOnUse" x1="1056.5" x2="1191.5"><stop offset="0" stop-color="#000eff"/><stop offset=".18" stop-color="#0300ff"/><stop offset=".98" stop-color="#d300ff"/><stop offset="1" stop-color="#da00ff"/></linearGradient>
<linearGradient id="c134" gradientUnits="userSpaceOnUse" x1="1058.5" x2="1182.5"><stop offset="0" stop-color="#0009ff"/><stop offset=".17" stop-color="#0300ff"/><stop offset="1" stop-color="#c700ff"/></linearGradient>
<linearGradient id="c135" gradientUnits="userSpaceOnUse" x1="1061.5" x2="1172.5"><stop offset="0" stop-color="#0002ff"/><stop offset=".14" stop-color="#0100ff"/><stop offset="1" stop-color="#b300ff"/></linearGradient>
<linearGradient id="c136" gradientUnits="userSpaceOnUse" x1="1063.5" x2="1163.5"><stop offset="0" stop-color="#0000ff"/><stop offset=".13" stop-color="#0200ff"/><stop offset="1" stop-color="#a200ff"/></linearGradient>
<linearGradient id="c137" gradientUnits="userSpaceOnUse" x1="1066.5" x2="1154.5"><stop offset="0" stop-color="#0000ff"/><stop offset=".1" stop-color="#0200ff"/><stop offset="1" stop-color="#9200ff"/></linearGradient>
<linearGradient id="c138" gradientUnits="userSpaceOnUse" x1="1070.5" x2="1145.5"><stop offset="0" stop-color="#0000ff"/><stop offset=".07" stop-color="#0500ff"/><stop offset="1" stop-color="#8200ff"/></linearGradient>
<linearGradient id="c139" gradientUnits="userSpaceOnUse" x1="1073.5" x2="1136.5"><stop offset="0" stop-color="#0300ff"/><stop offset="1" stop-color="#7300ff"/></linearGradient>
<linearGradient id="c140" gradientUnits="userSpaceOnUse" x1="1078.5" x2="1127.5"><stop offset="0" stop-color="#0f00ff"/><stop offset="1" stop-color="#6400ff"/></linearGradient>
<linearGradient id="c141" gradientUnits="userSpaceOnUse" x1="1082.5" x2="1117.5"><stop offset="0" stop-color="#1800ff"/><stop offset="1" stop-color="#5400ff"/></linearGradient>
<linearGradient id="c142" gradientUnits="userSpaceOnUse" x1="1087.5" x2="1108.5"><stop offset="0" stop-color="#2300ff"/><stop offset="1" stop-color="#4600ff"/></linearGradient>
<linearGradient id="c143" gradientUnits="userSpaceOnUse" x1="1092.5" x2="1099.5"><stop offset="0" stop-color="#2d00ff"/><stop offset="1" stop-color="#3800ff"/></linearGradient>
<linearGradient id="i0" gradientUnits="userSpaceOnUse" x1="1374.5" x2="1582.5"><stop offset="0" stop-color="#b8ff00"/><stop offset=".81" stop-color="#fffd00"/><stop offset="1" stop-color="#ffec00"/></linearGradient>
<linearGradient id="i1" gradientUnits="userSpaceOnUse" x1="1374.5" x2="1582.5"><stop offset="0" stop-color="#b9ff00"/><stop offset=".8" stop-color="#fffd00"/><stop offset="1" stop-color="#ffeb00"/></linearGradient>
<linearGradient id="i2" gradientUnits="userSpaceOnUse" x1="1374.5" x2="1582.5"><stop offset="0" stop-color="#baff00"/><stop offset=".78" stop-color="#fffd00"/><stop offset="1" stop-color="#ffea00"/></linearGradient>
<linearGradient id="i3" gradientUnits="userSpaceOnUse" x1="1374.5" x2="1582.5"><stop offset="0" stop-color="#bcff00"/><stop offset=".77" stop-color="#fffd00"/><stop offset="1" stop-color="#ffe800"/></linearGradient>
<linearGradient id="i4" gradientUnits="userSpaceOnUse" x1="1374.5" x2="1582.5"><stop offset="0" stop-color="#bdff00"/><stop offset=".75" stop-color="#fffc00"/><stop offset="1" stop-color="#ffe700"/></linearGradient>
<linearGradient id="i5" gradientUnits="userSpaceOnUse" x1="1374.5" x2="1582.5"><stop offset="0" stop-color="#beff01"/><stop offset=".74" stop-color="#fffc00"/><stop offset="1" stop-color="#ffe600"/></linearGradient>
<linearGradient id="i6" gradientUnits="userSpaceOnUse" x1="1374.5" x2="1582.5"><stop offset="0" stop-color="#bfff02"/><stop offset=".72" stop-color="#fffd00"/><stop offset="1" stop-color="#ffe500"/></linearGradient>
<linearGradient id="i7" gradientUnits="userSpaceOnUse" x1="1374.5" x2="1582.5"><stop offset="0" stop-color="#c0ff03"/><stop offset=".36" stop-color="#e0ff00"/><stop offset=".71" stop-color="#fffd00"/><stop offset="1" stop-color="#ffe300"/></linearGradient>
<linearGradient id="i8" gradientUnits="userSpaceOnUse" x1="1374.5" x2="1582.5"><stop offset="0" stop-color="#c1ff04"/><stop offset=".3" stop-color="#dcff00"/><stop offset=".69" stop-color="#fffd00"/><stop offset="1" stop-color="#ffe200"/></linearGradient>
<linearGradient id="i9" gradientUnits="userSpaceOnUse" x1="1374.5" x2="1582.5"><stop offset="0" stop-color="#c3ff05"/><stop offset=".29" stop-color="#ddff00"/><stop offset=".68" stop-color="#fffd00"/><stop offset="1" stop-color="#ffe100"/></linearGradient>
<linearGradient id="i10" gradientUnits="userSpaceOnUse" x1="1374.5" x2="1582.5"><stop offset="0" stop-color="#c4ff06"/><stop offset=".31" stop-color="#e0ff00"/><stop offset=".66" stop-color="#fffd00"/><stop offset="1" stop-color="#ffdf00"/></linearGradient>
<linearGradient id="i11" gradientUnits="userSpaceOnUse" x1="1374.5" x2="1582.5"><stop offset="0" stop-color="#c5ff07"/><stop offset=".33" stop-color="#e3ff00"/><stop offset=".65" stop-color="#fffc00"/><stop offset="1" stop-color="#ffde00"/></linearGradient>
<linearGradient id="i12" gradientUnits="userSpaceOnUse" x1="1374.5" x2="1582.5"><stop offset="0" stop-color="#c6ff08"/><stop offset=".36" stop-color="#e7ff00"/><stop offset=".63" stop-color="#fffc00"/><stop offset="1" stop-color="#ffdd00"/></linearGradient>
<linearGradient id="i13" gradientUnits="userSpaceOnUse" x1="1374.5" x2="1582.5"><stop offset="0" stop-color="#c7ff09"/><stop offset=".39" stop-color="#ebff00"/><stop offset=".62" stop-color="#fffc00"/><stop offset="1" stop-color="#ffdc00"/></linearGradient>
<linearGradient id="i14" gradientUnits="userSpaceOnUse" x1="1374.5" x2="1582.5"><stop offset="0" stop-color="#c9ff0a"/><stop offset=".42" stop-color="#f0ff00"/><stop offset=".61" stop-color="#fffc00"/><stop offset="1" stop-color="#ffda00"/></linearGradient>
<linearGradient id="i15" gradientUnits="userSpaceOnUse" x1="1374.5" x2="1582.5"><stop offset="0" stop-color="#caff0b"/><stop offset=".45" stop-color="#f4ff00"/><stop offset=".59" stop-color="#fffc00"/><stop offset="1" stop-color="#ffd900"/></linearGradient>
<linearGradient id="i16" gradientUnits="userSpaceOnUse" x1="1374.5" x2="1582.5"><stop offset="0" stop-color="#cbff0c"/><stop offset=".48" stop-color="#f8ff00"/><stop offset=".59" stop-color="#fffb00"/><stop offset="1" stop-color="#ffd800"/></linearGradient>
<linearGradient id="i17" gradientUnits="userSpaceOnUse" x1="1374.5" x2="1582.5"><stop offset="0" stop-color="#ccff0d"/><stop offset=".5" stop-color="#fcff00"/><stop offset=".98" stop-color="#ffd800"/><stop offset="1" stop-color="#ffd700"/></linearGradient>
<linearGradient id="i18" gradientUnits="userSpaceOnUse" x1="1374.5" x2="1582.5"><stop offset="0" stop-color="#ceff0e"/><stop offset=".54" stop-color="#fffd00"/><stop offset="1" stop-color="#ffd500"/></linearGradient>
<linearGradient id="i19" gradientUnits="userSpaceOnUse" x1="1374.5" x2="1582.5"><stop offset="0" stop-color="#cfff0f"/><stop offset=".52" stop-color="#fffd00"/><stop offset="1" stop-color="#ffd400"/></linearGradient>
<linearGradient id="i20" gradientUnits="userSpaceOnUse" x1="1374.5" x2="1582.5"><stop offset="0" stop-color="#d0ff10"/><stop offset=".51" stop-color="#fffd00"/><stop offset="1" stop-color="#ffd300"/></linearGradient>
<linearGradient id="i21" gradientUnits="userSpaceOnUse" x1="1374.5" x2="1582.5"><stop offset="0" stop-color="#d1ff11"/><stop offset=".5" stop-color="#fffd02"/><stop offset="1" stop-color="#ffd200"/></linearGradient>
<linearGradient id="i22" gradientUnits="userSpaceOnUse" x1="1374.5" x2="1582.5"><stop offset="0" stop-color="#d3ff12"/><stop offset=".48" stop-color="#fffd03"/><stop offset=".8" stop-color="#ffe000"/><stop offset="1" stop-color="#ffd100"/></linearGradient>
<linearGradient id="i23" gradientUnits="userSpaceOnUse" x1="1374.5" x2="1582.5"><stop offset="0" stop-color="#d4ff13"/><stop offset=".47" stop-color="#fffc05"/><stop offset=".74" stop-color="#ffe400"/><stop offset="1" stop-color="#ffcf00"/></linearGradient>
<linearGradient id="i24" gradientUnits="userSpaceOnUse" x1="1374.5" x2="1582.5"><stop offset="0" stop-color="#d5ff14"/><stop offset=".45" stop-color="#fffc07"/><stop offset=".74" stop-color="#ffe200"/><stop offset="1" stop-color="#ffce00"/></linearGradient>
<linearGradient id="i25" gradientUnits="userSpaceOnUse" x1="1374.5" x2="1582.5"><stop offset="0" stop-color="#d7ff15"/><stop offset=".44" stop-color="#fffc08"/><stop offset=".76" stop-color="#ffdf00"/><stop offset="1" stop-color="#ffcd00"/></linearGradient>
<linearGradient id="i26" gradientUnits="userSpaceOnUse" x1="1374.5" x2="1582.5"><stop offset="0" stop-color="#d8ff16"/><stop offset=".42" stop-color="#fffd0a"/><stop offset=".79" stop-color="#ffdc00"/><stop offset="1" stop-color="#ffcc00"/></linearGradient>
<linearGradient id="i27" gradientUnits="userSpaceOnUse" x1="1374.5" x2="1582.5"><stop offset="0" stop-color="#d9ff16"/><stop offset=".4" stop-color="#fffd0b"/><stop offset=".82" stop-color="#ffd800"/><stop offset="1" stop-color="#ffcb00"/></linearGradient>
<linearGradient id="i28" gradientUnits="userSpaceOnUse" x1="1374.5" x2="1582.5"><stop offset="0" stop-color="#dbff17"/><stop offset=".39" stop-color="#fffd0d"/><stop offset=".85" stop-color="#ffd500"/><stop offset="1" stop-color="#ffc900"/></linearGradient>
<linearGradient id="i29" gradientUnits="userSpaceOnUse" x1="1374.5" x2="1582.5"><stop offset="0" stop-color="#dcff18"/><stop offset=".38" stop-color="#fffd0e"/><stop offset=".88" stop-color="#ffd100"/><stop offset="1" stop-color="#ffc800"/></linearGradient>
<linearGradient id="i30" gradientUnits="userSpaceOnUse" x1="1374.5" x2="1582.5"><stop offset="0" stop-color="#ddff19"/><stop offset=".36" stop-color="#fffc0f"/><stop offset=".91" stop-color="#ffce00"/><stop offset="1" stop-color="#ffc700"/></linearGradient>
<linearGradient id="i31" gradientUnits="userSpaceOnUse" x1="1374.5" x2="1582.5"><stop offset="0" stop-color="#dfff1a"/><stop offset=".35" stop-color="#fffc11"/><stop offset=".94" stop-color="#ffca00"/><stop offset="1" stop-color="#ffc600"/></linearGradient>
<linearGradient id="i32" gradientUnits="userSpaceOnUse" x1="1374.5" x2="1582.5"><stop offset="0" stop-color="#e0ff1b"/><stop offset=".33" stop-color="#fffc12"/><stop offset=".96" stop-color="#ffc700"/><stop offset="1" stop-color="#ffc500"/></linearGradient>
<linearGradient id="i33" gradientUnits="userSpaceOnUse" x1="1374.5" x2="1582.5"><stop offset="0" stop-color="#e2ff1c"/><stop offset=".31" stop-color="#fffd14"/><stop offset=".94" stop-color="#ffc800"/><stop offset="1" stop-color="#ffc400"/></linearGradient>
<linearGradient id="i34" gradientUnits="userSpaceOnUse" x1="1374.5" x2="1582.5"><stop offset="0" stop-color="#e3ff1d"/><stop offset=".3" stop-color="#fffd15"/><stop offset=".92" stop-color="#ffc801"/><stop offset="1" stop-color="#ffc200"/></linearGradient>
<linearGradient id="i35" gradientUnits="userSpaceOnUse" x1="1374.5" x2="1582.5"><stop offset="0" stop-color="#e4ff1e"/><stop offset=".28" stop-color="#fffd17"/><stop offset=".91" stop-color="#ffc702"/><stop offset="1" stop-color="#ffc100"/></linearGradient>
<linearGradient id="i36" gradientUnits="userSpaceOnUse" x1="1374.5" x2="1582.5"><stop offset="0" stop-color="#e6ff1f"/><stop offset=".27" stop-color="#fffc18"/><stop offset=".89" stop-color="#ffc704"/><stop offset="1" stop-color="#ffc000"/></linearGradient>
<linearGradient id="i37" gradientUnits="userSpaceOnUse" x1="1374.5" x2="1582.5"><stop offset="0" stop-color="#e7ff20"/><stop offset=".25" stop-color="#fffc19"/><stop offset=".88" stop-color="#ffc705"/><stop offset="1" stop-color="#ffbf01"/></linearGradient>
<linearGradient id="i38" gradientUnits="userSpaceOnUse" x1="1374.5" x2="1582.5"><stop offset="0" stop-color="#e9ff21"/><stop offset=".24" stop-color="#fffc1b"/><stop offset=".86" stop-color="#ffc707"/><stop offset="1" stop-color="#ffbe02"/></linearGradient>
<linearGradient id="i39" gradientUnits="userSpaceOnUse" x1="1374.5" x2="1582.5"><stop offset="0" stop-color="#eaff22"/><stop offset=".23" stop-color="#fffc1c"/><stop offset=".85" stop-color="#ffc708"/><stop offset="1" stop-color="#ffbd03"/></linearGradient>
<linearGradient id="i40" gradientUnits="userSpaceOnUse" x1="1374.5" x2="1582.5"><stop offset="0" stop-color="#ebff23"/><stop offset=".22" stop-color="#fffc1d"/><stop offset=".84" stop-color="#ffc709"/><stop offset="1" stop-color="#ffbc04"/></linearGradient>
<clipPath id="inc"><rect x="1374" y="134" width="208.5" height="161"/></clipPath>
</defs>
<defs><linearGradient id="rb" x1="0" y1="0" x2="1" y2="1"><stop offset="0" stop-color="#2c8"/><stop offset=".25" stop-color="#fc0"/><stop offset=".5" stop-color="#f33"/><stop offset=".75" stop-color="#a3f"/><stop offset="1" stop-color="#08f"/></linearGradient></defs>
<text x="10.2" y="13.8" font-size="8" text-anchor="middle" textLength="10.8" lengthAdjust="spacingAndGlyphs" font-weight="bold" fill="#fff">CM</text>
<text x="22.8" y="16" font-size="12" textLength="343" lengthAdjust="spacingAndGlyphs" fill="#fff">CalMAN 2016 CalMAN Ultimate for Business 304 Days Remaining</text>
<path d="M1479 10.5h10M1524.5 7.5h7v7h-7zM1526.5 7.5v-2h7v7h-2M1570 5l10 10M1580 5l-10 10" fill="none" stroke="#fff" stroke-width="1"/>
<defs><filter id="ds" x="-5%" y="-20%" width="110%" height="150%"><feDropShadow dx="1" dy="1" stdDeviation=".35" flood-color="#155a15" flood-opacity=".6"/></filter></defs>
<text x="12" y="48.2" font-size="30" textLength="132.6" lengthAdjust="spacingAndGlyphs" fill="#fff" stroke="#fff" stroke-width="0.85" stroke-linejoin="round" filter="url(#ds)">CalMAN</text>
<path d="M161.1 35.9h9.9l-4.95 5.3z" fill="#fff"/>
<path d="M10.2 66.9v9.6l5.2-4.8z" fill="#fff"/>
<text x="35" y="78" font-size="11.5" textLength="47.4" lengthAdjust="spacingAndGlyphs" fill="#e6e6e6" stroke="#e6e6e6" stroke-width="0.3">History 1</text>
<path d="M99.8 75.5h6.6M103.1 72.2v6.6" stroke="#8c8c8c" stroke-width="1.1" fill="none"/>
<text x="1066.5" y="69.8" font-size="10.4" textLength="67" lengthAdjust="spacingAndGlyphs" fill="#fff" stroke="#fff" stroke-width="0.25">X-Rite i1Pro 2</text>
<text x="1066.7" y="84" font-size="10.4" textLength="78.4" lengthAdjust="spacingAndGlyphs" fill="#fff" stroke="#fff" stroke-width="0.25">LCD Direct View</text>
<text x="1197.5" y="76.3" font-size="9" text-anchor="middle" textLength="16.4" lengthAdjust="spacingAndGlyphs" font-weight="bold" fill="#fff">235</text>
<text x="1226.8" y="70" font-size="10.4" textLength="34.2" lengthAdjust="spacingAndGlyphs" fill="#fff" stroke="#fff" stroke-width="0.25">Source</text>
<text x="1363" y="70" font-size="10.4" textLength="106.5" lengthAdjust="spacingAndGlyphs" fill="#fff" stroke="#fff" stroke-width="0.25">Direct Display Control</text>
<path d="M1152.5 70.5h10l-5 5.4z" fill="#fff"/>
<path d="M1327.5 70.5h10l-5 5.4z" fill="#fff"/>
<path d="M1477.5 70.5h10l-5 5.4z" fill="#fff"/>
<path d="M1521.9 72.1L1524.3 72.1M1520.64 75.14L1522.34 76.84M1517.6 76.4L1517.6 78.8M1514.56 75.14L1512.86 76.84M1513.3 72.1L1510.9 72.1M1514.56 69.06L1512.86 67.36M1517.6 67.8L1517.6 65.4M1520.64 69.06L1522.34 67.36" stroke="#d8d8d8" stroke-width="2.1" fill="none"/>
<circle cx="1517.6" cy="72.1" r="3.9" fill="none" stroke="#d8d8d8" stroke-width="1.8"/>
<text x="1554" y="77.6" font-size="15.5" text-anchor="middle" font-weight="bold" fill="#fff">?</text>
<path d="M1589.8 67.2v10l-6.2-5z" fill="#fff"/>
<rect x="42" y="188.5" width="298.5" height="364" fill="#232323"/>
<path d="M81.5 188.5V557.5M121.5 188.5V557.5M160.5 188.5V557.5M201.5 188.5V557.5M240.5 188.5V557.5M280.5 188.5V557.5M319.5 188.5V557.5M42 552.5V557.5M36 188.5H42M36 249.5H42M36 309.5H42M36 370.5H42M36 430.5H42M36 491.5H42M36 552.5H42" stroke="#8c8c8c" stroke-width="1" fill="none"/>
<g clip-path="url(#dec)" stroke="#000" stroke-width="1"><rect x="42.5" y="194.9" width="127" height="5.8" fill="url(#e00)"/><rect x="42.5" y="202.1" width="182" height="5.8" fill="url(#e01)"/><rect x="42.5" y="209.3" width="517.6" height="5.8" fill="url(#e02)"/><rect x="42.5" y="216.5" width="94.8" height="5.8" fill="url(#e03)"/><rect x="42.5" y="223.7" width="220" height="5.8" fill="url(#e04)"/><rect x="42.5" y="230.9" width="113" height="5.8" fill="url(#e05)"/><rect x="42.5" y="255.8" width="88" height="5.8" fill="url(#e10)"/><rect x="42.5" y="263" width="143.2" height="5.8" fill="url(#e11)"/><rect x="42.5" y="270.2" width="349.6" height="5.8" fill="url(#e12)"/><rect x="42.5" y="277.4" width="77" height="5.8" fill="url(#e13)"/><rect x="42.5" y="284.6" width="194" height="5.8" fill="url(#e14)"/><rect x="42.5" y="291.8" width="91.8" height="5.8" fill="url(#e15)"/><rect x="42.5" y="315.9" width="88" height="5.8" fill="url(#e20)"/><rect x="42.5" y="323.1" width="127" height="5.8" fill="url(#e21)"/><rect x="42.5" y="330.3" width="233.2" height="5.8" fill="url(#e22)"/><rect x="42.5" y="337.5" width="67" height="5.8" fill="url(#e23)"/><rect x="42.5" y="344.7" width="159" height="5.8" fill="url(#e24)"/><rect x="42.5" y="351.9" width="87" height="5.8" fill="url(#e25)"/><rect x="42.5" y="376.9" width="92" height="5.8" fill="url(#e30)"/><rect x="42.5" y="384.1" width="106.2" height="5.8" fill="url(#e31)"/><rect x="42.5" y="391.3" width="160" height="5.8" fill="url(#e32)"/><rect x="42.5" y="398.5" width="58" height="5.8" fill="url(#e33)"/><rect x="42.5" y="405.7" width="146.2" height="5.8" fill="url(#e34)"/><rect x="42.5" y="412.9" width="71" height="5.8" fill="url(#e35)"/><rect x="42.5" y="438" width="96.1" height="5.8" fill="url(#e40)"/><rect x="42.5" y="445.2" width="90" height="5.8" fill="url(#e41)"/><rect x="42.5" y="452.4" width="118.4" height="5.8" fill="url(#e42)"/><rect x="42.5" y="459.6" width="42.9" height="5.8" fill="url(#e43)"/><rect x="42.5" y="466.8" width="118.4" height="5.8" fill="url(#e44)"/><rect x="42.5" y="474" width="46.2" height="5.8" fill="url(#e45)"/><rect x="42.5" y="540.7" width="48.4" height="6.3" fill="url(#ew)"/></g>
<path d="M42 188.5H340.5V552.5H42Z" stroke="#8c8c8c" stroke-width="1" fill="none"/>
<text x="174.2" y="184.3" font-size="13.3" text-anchor="middle" textLength="78" lengthAdjust="spacingAndGlyphs" fill="#d6d6d6">DeltaE 2000</text>
<text x="41.7" y="224.9" font-size="12.2" text-anchor="end" textLength="36.47" lengthAdjust="spacingAndGlyphs" fill="#d6d6d6">100%</text>
<text x="41.7" y="283.9" font-size="12.2" text-anchor="end" textLength="28.54" lengthAdjust="spacingAndGlyphs" fill="#d6d6d6">80%</text>
<text x="41.7" y="345.8" font-size="12.2" text-anchor="end" textLength="28.54" lengthAdjust="spacingAndGlyphs" fill="#d6d6d6">60%</text>
<text x="41.7" y="406.6" font-size="12.2" text-anchor="end" textLength="28.54" lengthAdjust="spacingAndGlyphs" fill="#d6d6d6">40%</text>
<text x="41.7" y="466.8" font-size="12.2" text-anchor="end" textLength="28.54" lengthAdjust="spacingAndGlyphs" fill="#d6d6d6">20%</text>
<text x="41.7" y="527.8" font-size="12.2" text-anchor="end" textLength="23.79" lengthAdjust="spacingAndGlyphs" fill="#d6d6d6">100</text>
<text x="41.7" y="571.8" font-size="12.6" text-anchor="middle" textLength="8.41" lengthAdjust="spacingAndGlyphs" fill="#d6d6d6">0</text>
<text x="81.4" y="571.8" font-size="12.6" text-anchor="middle" textLength="8.41" lengthAdjust="spacingAndGlyphs" fill="#d6d6d6">2</text>
<text x="121.1" y="571.8" font-size="12.6" text-anchor="middle" textLength="8.41" lengthAdjust="spacingAndGlyphs" fill="#d6d6d6">4</text>
<text x="160.8" y="571.8" font-size="12.6" text-anchor="middle" textLength="8.41" lengthAdjust="spacingAndGlyphs" fill="#d6d6d6">6</text>
<text x="200.5" y="571.8" font-size="12.6" text-anchor="middle" textLength="8.41" lengthAdjust="spacingAndGlyphs" fill="#d6d6d6">8</text>
<text x="240.2" y="571.8" font-size="12.6" text-anchor="middle" textLength="16.82" lengthAdjust="spacingAndGlyphs" fill="#d6d6d6">10</text>
<text x="279.9" y="571.8" font-size="12.6" text-anchor="middle" textLength="16.82" lengthAdjust="spacingAndGlyphs" fill="#d6d6d6">12</text>
<text x="319.6" y="571.8" font-size="12.6" text-anchor="middle" textLength="16.82" lengthAdjust="spacingAndGlyphs" fill="#d6d6d6">14</text>
<rect x="391.5" y="128.5" width="139" height="279" fill="#232323"/>
<path d="M386 129.5H530.5M386 176.5H530.5M386 222.5H530.5M386 268.5H530.5M386 315.5H530.5M386 362.5H530.5M386 407.5H391.5M391.5 407.5V412.5M530.5 407.5V412.5M391.5 128.5H530.5V407.5H391.5Z" stroke="#8c8c8c" stroke-width="1" fill="none"/>
<rect x="405.5" y="268.9" width="110.6" height="44.8" fill="url(#yb)" stroke="#000" stroke-width="1"/>
<text x="448" y="124.3" font-size="13" text-anchor="middle" textLength="41.33" lengthAdjust="spacingAndGlyphs" fill="#d6d6d6">DeltaL</text>
<text x="385.9" y="134.35" font-size="11.8" text-anchor="end" textLength="15.75" lengthAdjust="spacingAndGlyphs" fill="#d6d6d6">15</text>
<text x="385.9" y="180.8" font-size="11.8" text-anchor="end" textLength="15.75" lengthAdjust="spacingAndGlyphs" fill="#d6d6d6">10</text>
<text x="385.9" y="227.25" font-size="11.8" text-anchor="end" textLength="7.87" lengthAdjust="spacingAndGlyphs" fill="#d6d6d6">5</text>
<text x="385.9" y="273.7" font-size="11.8" text-anchor="end" textLength="7.87" lengthAdjust="spacingAndGlyphs" fill="#d6d6d6">0</text>
<text x="385.9" y="320.15" font-size="11.8" text-anchor="end" textLength="12.59" lengthAdjust="spacingAndGlyphs" fill="#d6d6d6">-5</text>
<text x="385.9" y="366.6" font-size="11.8" text-anchor="end" textLength="20.46" lengthAdjust="spacingAndGlyphs" fill="#d6d6d6">-10</text>
<text x="385.9" y="413.05" font-size="11.8" text-anchor="end" textLength="20.46" lengthAdjust="spacingAndGlyphs" fill="#d6d6d6">-15</text>
<text x="461" y="422.1" font-size="11.8" text-anchor="middle" textLength="36" lengthAdjust="spacingAndGlyphs" fill="#d6d6d6">100%</text>
<rect x="580.5" y="128.5" width="139" height="279" fill="#232323"/>
<path d="M575 129.5H719.5M575 176.5H719.5M575 222.5H719.5M575 268.5H719.5M575 315.5H719.5M575 362.5H719.5M575 407.5H580.5M580.5 407.5V412.5M719.5 407.5V412.5M580.5 128.5H719.5V407.5H580.5Z" stroke="#8c8c8c" stroke-width="1" fill="none"/>
<rect x="594.5" y="268.9" width="110.6" height="50.7" fill="url(#yb)" stroke="#000" stroke-width="1"/>
<text x="637" y="124.3" font-size="13" text-anchor="middle" textLength="43.71" lengthAdjust="spacingAndGlyphs" fill="#d6d6d6">DeltaC</text>
<text x="574.9" y="134.35" font-size="11.8" text-anchor="end" textLength="15.75" lengthAdjust="spacingAndGlyphs" fill="#d6d6d6">15</text>
<text x="574.9" y="180.8" font-size="11.8" text-anchor="end" textLength="15.75" lengthAdjust="spacingAndGlyphs" fill="#d6d6d6">10</text>
<text x="574.9" y="227.25" font-size="11.8" text-anchor="end" textLength="7.87" lengthAdjust="spacingAndGlyphs" fill="#d6d6d6">5</text>
<text x="574.9" y="273.7" font-size="11.8" text-anchor="end" textLength="7.87" lengthAdjust="spacingAndGlyphs" fill="#d6d6d6">0</text>
<text x="574.9" y="320.15" font-size="11.8" text-anchor="end" textLength="12.59" lengthAdjust="spacingAndGlyphs" fill="#d6d6d6">-5</text>
<text x="574.9" y="366.6" font-size="11.8" text-anchor="end" textLength="20.46" lengthAdjust="spacingAndGlyphs" fill="#d6d6d6">-10</text>
<text x="574.9" y="413.05" font-size="11.8" text-anchor="end" textLength="20.46" lengthAdjust="spacingAndGlyphs" fill="#d6d6d6">-15</text>
<text x="650" y="422.1" font-size="11.8" text-anchor="middle" textLength="36" lengthAdjust="spacingAndGlyphs" fill="#d6d6d6">100%</text>
<rect x="769.5" y="128.5" width="139" height="279" fill="#232323"/>
<path d="M764 129.5H908.5M764 176.5H908.5M764 222.5H908.5M764 268.5H908.5M764 315.5H908.5M764 362.5H908.5M764 407.5H769.5M769.5 407.5V412.5M908.5 407.5V412.5M769.5 128.5H908.5V407.5H769.5Z" stroke="#8c8c8c" stroke-width="1" fill="none"/>
<rect x="783.5" y="268.9" width="110.6" height="61.5" fill="url(#yb)" stroke="#000" stroke-width="1"/>
<text x="826" y="124.3" font-size="13" text-anchor="middle" textLength="43.71" lengthAdjust="spacingAndGlyphs" fill="#d6d6d6">DeltaH</text>
<text x="763.9" y="134.35" font-size="11.8" text-anchor="end" textLength="15.75" lengthAdjust="spacingAndGlyphs" fill="#d6d6d6">15</text>
<text x="763.9" y="180.8" font-size="11.8" text-anchor="end" textLength="15.75" lengthAdjust="spacingAndGlyphs" fill="#d6d6d6">10</text>
<text x="763.9" y="227.25" font-size="11.8" text-anchor="end" textLength="7.87" lengthAdjust="spacingAndGlyphs" fill="#d6d6d6">5</text>
<text x="763.9" y="273.7" font-size="11.8" text-anchor="end" textLength="7.87" lengthAdjust="spacingAndGlyphs" fill="#d6d6d6">0</text>
<text x="763.9" y="320.15" font-size="11.8" text-anchor="end" textLength="12.59" lengthAdjust="spacingAndGlyphs" fill="#d6d6d6">-5</text>
<text x="763.9" y="366.6" font-size="11.8" text-anchor="end" textLength="20.46" lengthAdjust="spacingAndGlyphs" fill="#d6d6d6">-10</text>
<text x="763.9" y="413.05" font-size="11.8" text-anchor="end" textLength="20.46" lengthAdjust="spacingAndGlyphs" fill="#d6d6d6">-15</text>
<text x="839" y="422.1" font-size="11.8" text-anchor="middle" textLength="36" lengthAdjust="spacingAndGlyphs" fill="#d6d6d6">100%</text>
<rect x="360" y="437" width="567" height="143" fill="#000"/>
<rect x="380" y="443.5" width="95.2" height="57.5" fill="#bebca3"/>
<rect x="380" y="501" width="95.2" height="59" fill="#bfc0a3"/>
<rect x="380.5" y="443.5" width="94.2" height="116.5" fill="none" stroke="#fff" stroke-width="1"/>
<text x="427.6" y="573" font-size="11.6" text-anchor="middle" textLength="22.52" lengthAdjust="spacingAndGlyphs" fill="#fff" stroke="#fff" stroke-width="0.3">20%</text>
<rect x="490.5" y="443.5" width="95.5" height="57.5" fill="#c1b889"/>
<rect x="490.5" y="501" width="95.5" height="59" fill="#c1c088"/>
<rect x="491" y="443.5" width="94.5" height="116.5" fill="none" stroke="#fff" stroke-width="1"/>
<text x="538.25" y="573" font-size="11.6" text-anchor="middle" textLength="22.52" lengthAdjust="spacingAndGlyphs" fill="#fff" stroke="#fff" stroke-width="0.3">40%</text>
<rect x="601" y="443.5" width="96" height="57.5" fill="#beb36e"/>
<rect x="601" y="501" width="96" height="59" fill="#c0c06c"/>
<rect x="601.5" y="443.5" width="95" height="116.5" fill="none" stroke="#fff" stroke-width="1"/>
<text x="649" y="573" font-size="11.6" text-anchor="middle" textLength="22.52" lengthAdjust="spacingAndGlyphs" fill="#fff" stroke="#fff" stroke-width="0.3">60%</text>
<rect x="712" y="443.5" width="96" height="57.5" fill="#c0b154"/>
<rect x="712" y="501" width="96" height="59" fill="#c0c04a"/>
<rect x="712.5" y="443.5" width="95" height="116.5" fill="none" stroke="#fff" stroke-width="1"/>
<text x="760" y="573" font-size="11.6" text-anchor="middle" textLength="22.52" lengthAdjust="spacingAndGlyphs" fill="#fff" stroke="#fff" stroke-width="0.3">80%</text>
<rect x="823" y="443.5" width="95.5" height="57.5" fill="#bdab20"/>
<rect x="823" y="501" width="95.5" height="59" fill="#c2c000"/>
<rect x="823.5" y="443.5" width="94.5" height="116.5" fill="none" stroke="#fff" stroke-width="1"/>
<text x="870.75" y="573" font-size="11.6" text-anchor="middle" textLength="28.78" lengthAdjust="spacingAndGlyphs" fill="#fff" stroke="#fff" stroke-width="0.3">100%</text>
<text transform="translate(372.5 468.7) rotate(-90)" font-size="12" fill="#fff" stroke="#fff" stroke-width=".3" text-anchor="middle" textLength="31" lengthAdjust="spacingAndGlyphs">Actual</text>
<text transform="translate(372.5 534) rotate(-90)" font-size="12" fill="#fff" stroke="#fff" stroke-width=".3" text-anchor="middle" textLength="31" lengthAdjust="spacingAndGlyphs">Target</text>
<rect x="339.5" y="625.5" width="243" height="160" fill="#232323"/>
<path d="M334 627.5H582.5M334 666.5H582.5M334 706.5H582.5M334 745.5H582.5M334 785.5H339.5M339.5 785.5V790.5M582.5 785.5V790.5M339.5 625.5H582.5V785.5H339.5Z" stroke="#8c8c8c" stroke-width="1" fill="none"/>
<rect x="363.5" y="706.3" width="64.2" height="4" fill="#f01010" stroke="#000" stroke-width="1"/>
<rect x="429.6" y="706.3" width="64" height="37.2" fill="url(#gg)" stroke="#000" stroke-width="1"/>
<rect x="494.6" y="641.6" width="64" height="64.7" fill="url(#gb)" stroke="#000" stroke-width="1"/>
<text x="448" y="622.2" font-size="13.4" text-anchor="middle" textLength="81" lengthAdjust="spacingAndGlyphs" fill="#d6d6d6">RGB Balance</text>
<text x="334.6" y="631.7" font-size="11.8" text-anchor="end" textLength="16.54" lengthAdjust="spacingAndGlyphs" fill="#d6d6d6">40</text>
<text x="334.6" y="671.15" font-size="11.8" text-anchor="end" textLength="16.54" lengthAdjust="spacingAndGlyphs" fill="#d6d6d6">20</text>
<text x="334.6" y="710.6" font-size="11.8" text-anchor="end" textLength="8.27" lengthAdjust="spacingAndGlyphs" fill="#d6d6d6">0</text>
<text x="334.6" y="750.05" font-size="11.8" text-anchor="end" textLength="21.49" lengthAdjust="spacingAndGlyphs" fill="#d6d6d6">-20</text>
<text x="334.6" y="789.5" font-size="11.8" text-anchor="end" textLength="21.49" lengthAdjust="spacingAndGlyphs" fill="#d6d6d6">-40</text>
<text x="461" y="798.6" font-size="11.8" text-anchor="middle" textLength="36" lengthAdjust="spacingAndGlyphs" fill="#d6d6d6">100%</text>
<text x="22.3" y="140.3" font-size="33.3" textLength="314.5" lengthAdjust="spacingAndGlyphs" fill="#f2f2f2">Saturation Sweeps</text>
<text x="13.4" y="643.8" font-size="24.4" textLength="212.6" lengthAdjust="spacingAndGlyphs" fill="#f2f2f2">Current Reading</text>
<text x="14.4" y="681.4" font-size="21.2" textLength="99.6" lengthAdjust="spacingAndGlyphs" fill="#f2f2f2">x: 0.4293</text>
<text x="14.4" y="717.4" font-size="21.2" textLength="100.3" lengthAdjust="spacingAndGlyphs" fill="#f2f2f2">y: 0.4858</text>
<text x="14.2" y="753" font-size="21.2" textLength="93.7" lengthAdjust="spacingAndGlyphs" fill="#f2f2f2">fL: 25.22</text>
<text x="13.8" y="788.6" font-size="21.2" textLength="141.5" lengthAdjust="spacingAndGlyphs" fill="#f2f2f2">cd/m²: 86.39</text>
<text x="780.8" y="624.9" font-size="14.6" textLength="40" lengthAdjust="spacingAndGlyphs" fill="#f0f0f0" stroke="#f0f0f0" stroke-width="0.25">20%</text>
<text x="884.7" y="624.9" font-size="14.6" textLength="40" lengthAdjust="spacingAndGlyphs" fill="#f0f0f0" stroke="#f0f0f0" stroke-width="0.25">40%</text>
<text x="988.6" y="624.9" font-size="14.6" textLength="40" lengthAdjust="spacingAndGlyphs" fill="#f0f0f0" stroke="#f0f0f0" stroke-width="0.25">60%</text>
<text x="1092.5" y="624.9" font-size="14.6" textLength="40" lengthAdjust="spacingAndGlyphs" fill="#f0f0f0" stroke="#f0f0f0" stroke-width="0.25">80%</text>
<text x="1195.2" y="624.9" font-size="14.6" textLength="52.5" lengthAdjust="spacingAndGlyphs" fill="#f0f0f0" stroke="#f0f0f0" stroke-width="0.25">100%</text>
<text x="627" y="650.9" font-size="15.6" textLength="76.8" lengthAdjust="spacingAndGlyphs" fill="#f0f0f0">x: CIE31</text>
<text x="780.1" y="650.9" font-size="15.6" textLength="67.8" lengthAdjust="spacingAndGlyphs" fill="#f0f0f0">0.3325</text>
<text x="884" y="650.9" font-size="15.6" textLength="67.8" lengthAdjust="spacingAndGlyphs" fill="#f0f0f0">0.3566</text>
<text x="987.9" y="650.9" font-size="15.6" textLength="67.8" lengthAdjust="spacingAndGlyphs" fill="#f0f0f0">0.3790</text>
<text x="1091.8" y="650.9" font-size="15.6" textLength="67.8" lengthAdjust="spacingAndGlyphs" fill="#f0f0f0">0.4009</text>
<text x="1195.7" y="650.9" font-size="15.6" textLength="67.8" lengthAdjust="spacingAndGlyphs" fill="#f0f0f0">0.4293</text>
<text x="627" y="675.9" font-size="15.6" textLength="76.8" lengthAdjust="spacingAndGlyphs" fill="#f0f0f0">y: CIE31</text>
<text x="780.1" y="675.9" font-size="15.6" textLength="67.8" lengthAdjust="spacingAndGlyphs" fill="#f0f0f0">0.3581</text>
<text x="884" y="675.9" font-size="15.6" textLength="67.8" lengthAdjust="spacingAndGlyphs" fill="#f0f0f0">0.3891</text>
<text x="987.9" y="675.9" font-size="15.6" textLength="67.8" lengthAdjust="spacingAndGlyphs" fill="#f0f0f0">0.4189</text>
<text x="1091.8" y="675.9" font-size="15.6" textLength="67.8" lengthAdjust="spacingAndGlyphs" fill="#f0f0f0">0.4492</text>
<text x="1195.7" y="675.9" font-size="15.6" textLength="67.8" lengthAdjust="spacingAndGlyphs" fill="#f0f0f0">0.4858</text>
<text x="627" y="700.9" font-size="15.6" textLength="13.5" lengthAdjust="spacingAndGlyphs" fill="#f0f0f0">Y</text>
<text x="780.1" y="700.9" font-size="15.6" textLength="90.5" lengthAdjust="spacingAndGlyphs" fill="#f0f0f0">104.1947</text>
<text x="884" y="700.9" font-size="15.6" textLength="79.15" lengthAdjust="spacingAndGlyphs" fill="#f0f0f0">99.6071</text>
<text x="987.9" y="700.9" font-size="15.6" textLength="79.15" lengthAdjust="spacingAndGlyphs" fill="#f0f0f0">94.6953</text>
<text x="1091.8" y="700.9" font-size="15.6" textLength="79.15" lengthAdjust="spacingAndGlyphs" fill="#f0f0f0">92.3603</text>
<text x="1195.7" y="700.9" font-size="15.6" textLength="79.15" lengthAdjust="spacingAndGlyphs" fill="#f0f0f0">86.3946</text>
<text x="627" y="725.9" font-size="15.6" textLength="139.1" lengthAdjust="spacingAndGlyphs" fill="#f0f0f0">Target x:CIE31</text>
<text x="780.1" y="725.9" font-size="15.6" textLength="67.8" lengthAdjust="spacingAndGlyphs" fill="#f0f0f0">0.3344</text>
<text x="884" y="725.9" font-size="15.6" textLength="67.8" lengthAdjust="spacingAndGlyphs" fill="#f0f0f0">0.3564</text>
<text x="987.9" y="725.9" font-size="15.6" textLength="67.8" lengthAdjust="spacingAndGlyphs" fill="#f0f0f0">0.3773</text>
<text x="1091.8" y="725.9" font-size="15.6" textLength="67.8" lengthAdjust="spacingAndGlyphs" fill="#f0f0f0">0.3969</text>
<text x="1195.7" y="725.9" font-size="15.6" textLength="67.8" lengthAdjust="spacingAndGlyphs" fill="#f0f0f0">0.4193</text>
<text x="627" y="750.9" font-size="15.6" textLength="139.1" lengthAdjust="spacingAndGlyphs" fill="#f0f0f0">Target y:CIE31</text>
<text x="780.1" y="750.9" font-size="15.6" textLength="67.8" lengthAdjust="spacingAndGlyphs" fill="#f0f0f0">0.3648</text>
<text x="884" y="750.9" font-size="15.6" textLength="67.8" lengthAdjust="spacingAndGlyphs" fill="#f0f0f0">0.4013</text>
<text x="987.9" y="750.9" font-size="15.6" textLength="67.8" lengthAdjust="spacingAndGlyphs" fill="#f0f0f0">0.4358</text>
<text x="1091.8" y="750.9" font-size="15.6" textLength="67.8" lengthAdjust="spacingAndGlyphs" fill="#f0f0f0">0.4682</text>
<text x="1195.7" y="750.9" font-size="15.6" textLength="67.8" lengthAdjust="spacingAndGlyphs" fill="#f0f0f0">0.5053</text>
<text x="627" y="775.9" font-size="15.6" textLength="81.3" lengthAdjust="spacingAndGlyphs" fill="#f0f0f0">Target Y</text>
<text x="780.1" y="775.9" font-size="15.6" textLength="90.5" lengthAdjust="spacingAndGlyphs" fill="#f0f0f0">107.2620</text>
<text x="884" y="775.9" font-size="15.6" textLength="90.5" lengthAdjust="spacingAndGlyphs" fill="#f0f0f0">105.3792</text>
<text x="987.9" y="775.9" font-size="15.6" textLength="90.5" lengthAdjust="spacingAndGlyphs" fill="#f0f0f0">103.9326</text>
<text x="1091.8" y="775.9" font-size="15.6" textLength="90.5" lengthAdjust="spacingAndGlyphs" fill="#f0f0f0">102.7973</text>
<text x="1195.7" y="775.9" font-size="15.6" textLength="90.5" lengthAdjust="spacingAndGlyphs" fill="#f0f0f0">101.6997</text>
<rect x="933" y="101" width="667" height="492" fill="#1b1b1b"/>
<rect x="940" y="107" width="653" height="480" fill="#333"/>
<rect x="968.6" y="128" width="621" height="433.4" fill="#232323"/>
<g clip-path="url(#loc)"><rect x="1015" y="129" width="28" height="3.6" fill="url(#c0)"/><rect x="1005" y="132" width="50" height="3.6" fill="url(#c1)"/><rect x="1000" y="135" width="64" height="3.6" fill="url(#c2)"/><rect x="996" y="138" width="77" height="3.6" fill="url(#c3)"/><rect x="993" y="141" width="89" height="3.6" fill="url(#c4)"/><rect x="990" y="144" width="99" height="3.6" fill="url(#c5)"/><rect x="988" y="147" width="109" height="3.6" fill="url(#c6)"/><rect x="986" y="150" width="116" height="3.6" fill="url(#c7)"/><rect x="984" y="153" width="126" height="3.6" fill="url(#c8)"/><rect x="983" y="156" width="133" height="3.6" fill="url(#c9)"/><rect x="981" y="159" width="141" height="3.6" fill="url(#c10)"/><rect x="980" y="162" width="148" height="3.6" fill="url(#c11)"/><rect x="978" y="165" width="155" height="3.6" fill="url(#c12)"/><rect x="977" y="168" width="162" height="3.6" fill="url(#c13)"/><rect x="976" y="171" width="168" height="3.6" fill="url(#c14)"/><rect x="975" y="174" width="174" height="3.6" fill="url(#c15)"/><rect x="975" y="177" width="180" height="3.6" fill="url(#c16)"/><rect x="974" y="180" width="186" height="3.6" fill="url(#c17)"/><rect x="973" y="183" width="192" height="3.6" fill="url(#c18)"/><rect x="973" y="186" width="197" height="3.6" fill="url(#c19)"/><rect x="972" y="189" width="203" height="3.6" fill="url(#c20)"/><rect x="972" y="192" width="208" height="3.6" fill="url(#c21)"/><rect x="971" y="195" width="213" height="3.6" fill="url(#c22)"/><rect x="971" y="198" width="217" height="3.6" fill="url(#c23)"/><rect x="971" y="201" width="223" height="3.6" fill="url(#c24)"/><rect x="971" y="204" width="228" height="3.6" fill="url(#c25)"/><rect x="970" y="207" width="233" height="3.6" fill="url(#c26)"/><rect x="970" y="210" width="238" height="3.6" fill="url(#c27)"/><rect x="970" y="213" width="242" height="3.6" fill="url(#c28)"/><rect x="969" y="216" width="248" height="3.6" fill="url(#c29)"/><rect x="969" y="219" width="252" height="3.6" fill="url(#c30)"/><rect x="969" y="222" width="256" height="3.6" fill="url(#c31)"/><rect x="969" y="225" width="262" height="3.6" fill="url(#c32)"/><rect x="969" y="228" width="266" height="3.6" fill="url(#c33)"/><rect x="969" y="231" width="270" height="3.6" fill="url(#c34)"/><rect x="969" y="234" width="274" height="3.6" fill="url(#c35)"/><rect x="969" y="237" width="278" height="3.6" fill="url(#c36)"/><rect x="969" y="240" width="283" height="3.6" fill="url(#c37)"/><rect x="969" y="243" width="288" height="3.6" fill="url(#c38)"/><rect x="969" y="246" width="292" height="3.6" fill="url(#c39)"/><rect x="969" y="249" width="296" height="3.6" fill="url(#c40)"/><rect x="970" y="252" width="300" height="3.6" fill="url(#c41)"/><rect x="970" y="255" width="304" height="3.6" fill="url(#c42)"/><rect x="970" y="258" width="308" height="3.6" fill="url(#c43)"/><rect x="970" y="261" width="313" height="3.6" fill="url(#c44)"/><rect x="971" y="264" width="316" height="3.6" fill="url(#c45)"/><rect x="971" y="267" width="321" height="3.6" fill="url(#c46)"/><rect x="971" y="270" width="325" height="3.6" fill="url(#c47)"/><rect x="971" y="273" width="329" height="3.6" fill="url(#c48)"/><rect x="972" y="276" width="332" height="3.6" fill="url(#c49)"/><rect x="972" y="279" width="337" height="3.6" fill="url(#c50)"/><rect x="972" y="282" width="341" height="3.6" fill="url(#c51)"/><rect x="972" y="285" width="345" height="3.6" fill="url(#c52)"/><rect x="973" y="288" width="348" height="3.6" fill="url(#c53)"/><rect x="973" y="291" width="353" height="3.6" fill="url(#c54)"/><rect x="974" y="294" width="356" height="3.6" fill="url(#c55)"/><rect x="974" y="297" width="360" height="3.6" fill="url(#c56)"/><rect x="975" y="300" width="364" height="3.6" fill="url(#c57)"/><rect x="975" y="303" width="368" height="3.6" fill="url(#c58)"/><rect x="976" y="306" width="371" height="3.6" fill="url(#c59)"/><rect x="976" y="309" width="375" height="3.6" fill="url(#c60)"/><rect x="977" y="312" width="379" height="3.6" fill="url(#c61)"/><rect x="977" y="315" width="384" height="3.6" fill="url(#c62)"/><rect x="978" y="318" width="387" height="3.6" fill="url(#c63)"/><rect x="978" y="321" width="390" height="3.6" fill="url(#c64)"/><rect x="979" y="324" width="394" height="3.6" fill="url(#c65)"/><rect x="979" y="327" width="399" height="3.6" fill="url(#c66)"/><rect x="980" y="330" width="402" height="3.6" fill="url(#c67)"/><rect x="981" y="333" width="406" height="3.6" fill="url(#c68)"/><rect x="981" y="336" width="410" height="3.6" fill="url(#c69)"/><rect x="982" y="339" width="414" height="3.6" fill="url(#c70)"/><rect x="982" y="342" width="418" height="3.6" fill="url(#c71)"/><rect x="983" y="345" width="421" height="3.6" fill="url(#c72)"/><rect x="983" y="348" width="425" height="3.6" fill="url(#c73)"/><rect x="984" y="351" width="428" height="3.6" fill="url(#c74)"/><rect x="985" y="354" width="431" height="3.6" fill="url(#c75)"/><rect x="985" y="357" width="436" height="3.6" fill="url(#c76)"/><rect x="986" y="360" width="439" height="3.6" fill="url(#c77)"/><rect x="987" y="363" width="442" height="3.6" fill="url(#c78)"/><rect x="988" y="366" width="446" height="3.6" fill="url(#c79)"/><rect x="989" y="369" width="449" height="3.6" fill="url(#c80)"/><rect x="990" y="372" width="452" height="3.6" fill="url(#c81)"/><rect x="991" y="375" width="456" height="3.6" fill="url(#c82)"/><rect x="991" y="378" width="459" height="3.6" fill="url(#c83)"/><rect x="992" y="381" width="463" height="3.6" fill="url(#c84)"/><rect x="993" y="384" width="467" height="3.6" fill="url(#c85)"/><rect x="994" y="387" width="469" height="3.6" fill="url(#c86)"/><rect x="994" y="390" width="474" height="3.6" fill="url(#c87)"/><rect x="995" y="393" width="478" height="3.6" fill="url(#c88)"/><rect x="996" y="396" width="481" height="3.6" fill="url(#c89)"/><rect x="997" y="399" width="484" height="3.6" fill="url(#c90)"/><rect x="998" y="402" width="488" height="3.6" fill="url(#c91)"/><rect x="999" y="405" width="490" height="3.6" fill="url(#c92)"/><rect x="1000" y="408" width="495" height="3.6" fill="url(#c93)"/><rect x="1001" y="411" width="498" height="3.6" fill="url(#c94)"/><rect x="1002" y="414" width="501" height="3.6" fill="url(#c95)"/><rect x="1002" y="417" width="506" height="3.6" fill="url(#c96)"/><rect x="1003" y="420" width="509" height="3.6" fill="url(#c97)"/><rect x="1004" y="423" width="509" height="3.6" fill="url(#c98)"/><rect x="1005" y="426" width="499" height="3.6" fill="url(#c99)"/><rect x="1006" y="429" width="489" height="3.6" fill="url(#c100)"/><rect x="1007" y="432" width="478" height="3.6" fill="url(#c101)"/><rect x="1008" y="435" width="468" height="3.6" fill="url(#c102)"/><rect x="1010" y="438" width="457" height="3.6" fill="url(#c103)"/><rect x="1011" y="441" width="447" height="3.6" fill="url(#c104)"/><rect x="1012" y="444" width="437" height="3.6" fill="url(#c105)"/><rect x="1013" y="447" width="427" height="3.6" fill="url(#c106)"/><rect x="1014" y="450" width="416" height="3.6" fill="url(#c107)"/><rect x="1015" y="453" width="406" height="3.6" fill="url(#c108)"/><rect x="1017" y="456" width="395" height="3.6" fill="url(#c109)"/><rect x="1018" y="459" width="385" height="3.6" fill="url(#c110)"/><rect x="1019" y="462" width="375" height="3.6" fill="url(#c111)"/><rect x="1020" y="465" width="365" height="3.6" fill="url(#c112)"/><rect x="1022" y="468" width="353" height="3.6" fill="url(#c113)"/><rect x="1023" y="471" width="343" height="3.6" fill="url(#c114)"/><rect x="1025" y="474" width="332" height="3.6" fill="url(#c115)"/><rect x="1026" y="477" width="322" height="3.6" fill="url(#c116)"/><rect x="1027" y="480" width="312" height="3.6" fill="url(#c117)"/><rect x="1029" y="483" width="300" height="3.6" fill="url(#c118)"/><rect x="1030" y="486" width="290" height="3.6" fill="url(#c119)"/><rect x="1032" y="489" width="279" height="3.6" fill="url(#c120)"/><rect x="1033" y="492" width="269" height="3.6" fill="url(#c121)"/><rect x="1035" y="495" width="258" height="3.6" fill="url(#c122)"/><rect x="1036" y="498" width="248" height="3.6" fill="url(#c123)"/><rect x="1038" y="501" width="236" height="3.6" fill="url(#c124)"/><rect x="1040" y="504" width="225" height="3.6" fill="url(#c125)"/><rect x="1042" y="507" width="214" height="3.6" fill="url(#c126)"/><rect x="1044" y="510" width="203" height="3.6" fill="url(#c127)"/><rect x="1046" y="513" width="192" height="3.6" fill="url(#c128)"/><rect x="1047" y="516" width="181" height="3.6" fill="url(#c129)"/><rect x="1049" y="519" width="170" height="3.6" fill="url(#c130)"/><rect x="1052" y="522" width="158" height="3.6" fill="url(#c131)"/><rect x="1054" y="525" width="147" height="3.6" fill="url(#c132)"/><rect x="1056" y="528" width="136" height="3.6" fill="url(#c133)"/><rect x="1058" y="531" width="125" height="3.6" fill="url(#c134)"/><rect x="1061" y="534" width="112" height="3.6" fill="url(#c135)"/><rect x="1063" y="537" width="101" height="3.6" fill="url(#c136)"/><rect x="1066" y="540" width="89" height="3.6" fill="url(#c137)"/><rect x="1070" y="543" width="76" height="3.6" fill="url(#c138)"/><rect x="1073" y="546" width="64" height="3.6" fill="url(#c139)"/><rect x="1078" y="549" width="50" height="3.6" fill="url(#c140)"/><rect x="1082" y="552" width="36" height="3.6" fill="url(#c141)"/><rect x="1087" y="555" width="22" height="3.6" fill="url(#c142)"/><rect x="1092" y="558" width="8" height="3.6" fill="url(#c143)"/><path d="M960 120H1525V570H960ZM1440.92 390.55L1190 251.1L1079.3 530.01Z" fill="#000" fill-opacity="0.4" fill-rule="evenodd"/></g>
<path d="M968.6 561.4V566.4M963.1 561H968.6M1042.4 561.4V566.4M963.1 509.51H968.6M1116.2 561.4V566.4M963.1 458.02H968.6M1190 561.4V566.4M963.1 406.53H968.6M1263.8 561.4V566.4M963.1 355.04H968.6M1337.6 561.4V566.4M963.1 303.55H968.6M1411.4 561.4V566.4M963.1 252.06H968.6M1485.2 561.4V566.4M963.1 200.57H968.6M1559 561.4V566.4M963.1 149.08H968.6M968.6 128H1589.6V561.4H968.6Z" stroke="#a8a8a8" stroke-width="1" fill="none"/>
<text x="1266.5" y="123" font-size="12.9" text-anchor="middle" textLength="75" lengthAdjust="spacingAndGlyphs" fill="#d6d6d6">CIE 1931 xy</text>
<text x="968.6" y="579.8" font-size="12.2" text-anchor="middle" textLength="8.26" lengthAdjust="spacingAndGlyphs" fill="#d6d6d6">0</text>
<text x="963.2" y="566" font-size="12.2" text-anchor="end" textLength="8.26" lengthAdjust="spacingAndGlyphs" fill="#d6d6d6">0</text>
<text x="1042.4" y="579.8" font-size="12.2" text-anchor="middle" textLength="20.64" lengthAdjust="spacingAndGlyphs" fill="#d6d6d6">0.1</text>
<text x="963.2" y="514.51" font-size="12.2" text-anchor="end" textLength="20.64" lengthAdjust="spacingAndGlyphs" fill="#d6d6d6">0.1</text>
<text x="1116.2" y="579.8" font-size="12.2" text-anchor="middle" textLength="20.64" lengthAdjust="spacingAndGlyphs" fill="#d6d6d6">0.2</text>
<text x="963.2" y="463.02" font-size="12.2" text-anchor="end" textLength="20.64" lengthAdjust="spacingAndGlyphs" fill="#d6d6d6">0.2</text>
<text x="1190" y="579.8" font-size="12.2" text-anchor="middle" textLength="20.64" lengthAdjust="spacingAndGlyphs" fill="#d6d6d6">0.3</text>
<text x="963.2" y="411.53" font-size="12.2" text-anchor="end" textLength="20.64" lengthAdjust="spacingAndGlyphs" fill="#d6d6d6">0.3</text>
<text x="1263.8" y="579.8" font-size="12.2" text-anchor="middle" textLength="20.64" lengthAdjust="spacingAndGlyphs" fill="#d6d6d6">0.4</text>
<text x="963.2" y="360.04" font-size="12.2" text-anchor="end" textLength="20.64" lengthAdjust="spacingAndGlyphs" fill="#d6d6d6">0.4</text>
<text x="1337.6" y="579.8" font-size="12.2" text-anchor="middle" textLength="20.64" lengthAdjust="spacingAndGlyphs" fill="#d6d6d6">0.5</text>
<text x="963.2" y="308.55" font-size="12.2" text-anchor="end" textLength="20.64" lengthAdjust="spacingAndGlyphs" fill="#d6d6d6">0.5</text>
<text x="1411.4" y="579.8" font-size="12.2" text-anchor="middle" textLength="20.64" lengthAdjust="spacingAndGlyphs" fill="#d6d6d6">0.6</text>
<text x="963.2" y="257.06" font-size="12.2" text-anchor="end" textLength="20.64" lengthAdjust="spacingAndGlyphs" fill="#d6d6d6">0.6</text>
<text x="1485.2" y="579.8" font-size="12.2" text-anchor="middle" textLength="20.64" lengthAdjust="spacingAndGlyphs" fill="#d6d6d6">0.7</text>
<text x="963.2" y="205.57" font-size="12.2" text-anchor="end" textLength="20.64" lengthAdjust="spacingAndGlyphs" fill="#d6d6d6">0.7</text>
<text x="1559" y="579.8" font-size="12.2" text-anchor="middle" textLength="20.64" lengthAdjust="spacingAndGlyphs" fill="#d6d6d6">0.8</text>
<text x="963.2" y="154.08" font-size="12.2" text-anchor="end" textLength="20.64" lengthAdjust="spacingAndGlyphs" fill="#d6d6d6">0.8</text>
<path d="M1182.5 244.5h12.8v12.8h-12.8zM1185 274.6h12.8v12.8h-12.8zM1186.6 302.1h12.8v12.8h-12.8zM1189.1 328.1h12.8v12.8h-12.8zM1190.6 356h12.8v12.8h-12.8zM1271.5 293.5h12.8v12.8h-12.8zM1254.5 313.1h12.8v12.8h-12.8zM1240.1 329.3h12.8v12.8h-12.8zM1224.5 346.1h12.8v12.8h-12.8zM1208.4 365.2h12.8v12.8h-12.8zM1127.5 385h12.8v12.8h-12.8zM1140.6 385h12.8v12.8h-12.8zM1153.7 385h12.8v12.8h-12.8zM1166.8 385h12.8v12.8h-12.8zM1179.8 385h12.8v12.8h-12.8zM1071.6 522.6h12.8v12.8h-12.8zM1097.7 492.5h12.8v12.8h-12.8zM1121.6 465.9h12.8v12.8h-12.8zM1144.6 440.2h12.8v12.8h-12.8zM1168.2 411.8h12.8v12.8h-12.8zM1198.1 474.5h12.8v12.8h-12.8zM1197.2 455h12.8v12.8h-12.8zM1195.6 437h12.8v12.8h-12.8zM1195.6 422h12.8v12.8h-12.8zM1194.6 403.1h12.8v12.8h-12.8zM1239.9 383.9h12.8v12.8h-12.8zM1289.5 383.9h12.8v12.8h-12.8zM1333.6 383.9h12.8v12.8h-12.8zM1380.5 383.9h12.8v12.8h-12.8zM1434.4 383.9h12.8v12.8h-12.8z" fill="none" stroke="#fff" stroke-width="1.25"/>
<rect x="1193.1" y="385.1" width="12.8" height="12.8" fill="none" stroke="#000" stroke-width="1.6"/>
<g stroke="#000" stroke-width="1.1"><circle cx="1222.5" cy="264" r="4.1" fill="#00be00"/><circle cx="1217.4" cy="294.8" r="4.1" fill="#46c046"/><circle cx="1212.3" cy="320.4" r="4.1" fill="#69c069"/><circle cx="1207.4" cy="345.4" r="4.1" fill="#82c082"/><circle cx="1203.3" cy="368.3" r="4.1" fill="#9bc09b"/><circle cx="1285.4" cy="309.8" r="4.1" fill="#bebe00"/><circle cx="1264.5" cy="329" r="4.1" fill="#c0c046"/><circle cx="1248.3" cy="344.6" r="4.1" fill="#c0c069"/><circle cx="1231.8" cy="360" r="4.1" fill="#c0c082"/><circle cx="1213.8" cy="375.6" r="4.1" fill="#c0c09b"/><circle cx="1145.9" cy="393.3" r="5" fill="#00bebe"/><circle cx="1159" cy="392.1" r="5" fill="#46c0c0"/><circle cx="1168.4" cy="390.7" r="4.1" fill="#69c0c0"/><circle cx="1178.5" cy="390.7" r="4.1" fill="#82c0c0"/><circle cx="1188.9" cy="390.7" r="4.1" fill="#9bc0c0"/><circle cx="1088.5" cy="492.9" r="4.1" fill="#000096"/><circle cx="1109.4" cy="472.1" r="4.1" fill="#4646c0"/><circle cx="1131.5" cy="451.6" r="4.1" fill="#6969c0"/><circle cx="1152.4" cy="432.9" r="4.1" fill="#8282c0"/><circle cx="1176" cy="411.4" r="4.8" fill="#9b9bc0"/><circle cx="1183.4" cy="456.7" r="4.1" fill="#be00be"/><circle cx="1187.3" cy="442.5" r="4.1" fill="#c046c0"/><circle cx="1190.5" cy="429.4" r="4.1" fill="#c069c0"/><circle cx="1191.3" cy="417.3" r="4.1" fill="#c082c0"/><circle cx="1195.4" cy="402.8" r="4.1" fill="#c09bc0"/><circle cx="1383.6" cy="382.7" r="4.1" fill="#be0000"/><circle cx="1345.5" cy="383.8" r="4.1" fill="#c03737"/><circle cx="1306.4" cy="384.8" r="4.1" fill="#c05050"/><circle cx="1271.3" cy="386.3" r="4.1" fill="#c06969"/><circle cx="1231.7" cy="387.3" r="4.8" fill="#c08787"/><circle cx="1199.5" cy="389" r="3.5" fill="#fff" stroke-width=".7"/></g>
<rect x="1371.4" y="128.5" width="217.7" height="169" fill="#2c2c2c"/>
<g clip-path="url(#inc)"><rect x="1374" y="134" width="209" height="4.6" fill="url(#i0)"/><rect x="1374" y="138" width="209" height="4.6" fill="url(#i1)"/><rect x="1374" y="142" width="209" height="4.6" fill="url(#i2)"/><rect x="1374" y="146" width="209" height="4.6" fill="url(#i3)"/><rect x="1374" y="150" width="209" height="4.6" fill="url(#i4)"/><rect x="1374" y="154" width="209" height="4.6" fill="url(#i5)"/><rect x="1374" y="158" width="209" height="4.6" fill="url(#i6)"/><rect x="1374" y="162" width="209" height="4.6" fill="url(#i7)"/><rect x="1374" y="166" width="209" height="4.6" fill="url(#i8)"/><rect x="1374" y="170" width="209" height="4.6" fill="url(#i9)"/><rect x="1374" y="174" width="209" height="4.6" fill="url(#i10)"/><rect x="1374" y="178" width="209" height="4.6" fill="url(#i11)"/><rect x="1374" y="182" width="209" height="4.6" fill="url(#i12)"/><rect x="1374" y="186" width="209" height="4.6" fill="url(#i13)"/><rect x="1374" y="190" width="209" height="4.6" fill="url(#i14)"/><rect x="1374" y="194" width="209" height="4.6" fill="url(#i15)"/><rect x="1374" y="198" width="209" height="4.6" fill="url(#i16)"/><rect x="1374" y="202" width="209" height="4.6" fill="url(#i17)"/><rect x="1374" y="206" width="209" height="4.6" fill="url(#i18)"/><rect x="1374" y="210" width="209" height="4.6" fill="url(#i19)"/><rect x="1374" y="214" width="209" height="4.6" fill="url(#i20)"/><rect x="1374" y="218" width="209" height="4.6" fill="url(#i21)"/><rect x="1374" y="222" width="209" height="4.6" fill="url(#i22)"/><rect x="1374" y="226" width="209" height="4.6" fill="url(#i23)"/><rect x="1374" y="230" width="209" height="4.6" fill="url(#i24)"/><rect x="1374" y="234" width="209" height="4.6" fill="url(#i25)"/><rect x="1374" y="238" width="209" height="4.6" fill="url(#i26)"/><rect x="1374" y="242" width="209" height="4.6" fill="url(#i27)"/><rect x="1374" y="246" width="209" height="4.6" fill="url(#i28)"/><rect x="1374" y="250" width="209" height="4.6" fill="url(#i29)"/><rect x="1374" y="254" width="209" height="4.6" fill="url(#i30)"/><rect x="1374" y="258" width="209" height="4.6" fill="url(#i31)"/><rect x="1374" y="262" width="209" height="4.6" fill="url(#i32)"/><rect x="1374" y="266" width="209" height="4.6" fill="url(#i33)"/><rect x="1374" y="270" width="209" height="4.6" fill="url(#i34)"/><rect x="1374" y="274" width="209" height="4.6" fill="url(#i35)"/><rect x="1374" y="278" width="209" height="4.6" fill="url(#i36)"/><rect x="1374" y="282" width="209" height="4.6" fill="url(#i37)"/><rect x="1374" y="286" width="209" height="4.6" fill="url(#i38)"/><rect x="1374" y="290" width="209" height="4.6" fill="url(#i39)"/><rect x="1374" y="294" width="209" height="1.6" fill="url(#i40)"/><path d="M1369 148.4L1587.5 281.97L1587.5 129L1369 129Z" fill="#000" fill-opacity="0.4"/></g>
<rect x="1373.5" y="133.5" width="209.5" height="162" fill="none" stroke="#9c9c9c" stroke-width="1"/>
<rect x="1470.5" y="208.6" width="12.6" height="11.4" fill="none" stroke="#fff" stroke-width="1.3"/>
<circle cx="1518.3" cy="276.6" r="4.1" fill="#bcbc10" stroke="#000" stroke-width="1.1"/>
<path d="M19.3 819h8.6l-4.3-4.6z" fill="#2c2c2c"/>
<text x="127" y="863.7" font-size="10.7" text-anchor="middle" textLength="21.42" lengthAdjust="spacingAndGlyphs" fill="#262626" stroke="#262626" stroke-width="0.3">20%</text>
<text x="279" y="863.7" font-size="10.7" text-anchor="middle" textLength="21.42" lengthAdjust="spacingAndGlyphs" fill="#262626" stroke="#262626" stroke-width="0.3">40%</text>
<text x="431" y="863.7" font-size="10.7" text-anchor="middle" textLength="21.42" lengthAdjust="spacingAndGlyphs" fill="#262626" stroke="#262626" stroke-width="0.3">60%</text>
<text x="583" y="863.7" font-size="10.7" text-anchor="middle" textLength="21.42" lengthAdjust="spacingAndGlyphs" fill="#262626" stroke="#262626" stroke-width="0.3">80%</text>
<text x="735" y="863.7" font-size="10.7" text-anchor="middle" textLength="28.6" lengthAdjust="spacingAndGlyphs" font-weight="bold" fill="#fff">100%</text>
<path d="M1297 819h9l-4.5-4.8z" fill="#303030"/>
<rect x="1286" y="833.2" width="30" height="29.6" rx="4" fill="none" stroke="#2c2c2c" stroke-width="2.4"/>
<rect x="1287" y="834.2" width="28" height="14" rx="3" fill="#fff" fill-opacity=".16"/><rect x="1294.2" y="841.2" width="13.5" height="13.3" fill="#000"/><rect x="1294.2" y="841.2" width="13.5" height="7" fill="#fff" fill-opacity=".13"/>
<rect x="1345.5" y="818.5" width="8" height="8" fill="#2a2a2a"/>
<path d="M1391.3 817.5v10l8.6-5z" fill="#2a2a2a"/>
<path d="M1438.4 818.8h-3.2v9.4h3.2M1441.8 818.8h3.2v9.4h-3.2" fill="none" stroke="#2a2a2a" stroke-width="2"/><path d="M1437.6 822.6h1.6v1.6h-1.6zM1441 822.6h1.6v1.6h-1.6z" fill="#2a2a2a"/>
<path d="M1484.8 823.1c-2-3.6-6.2-3.4-6.2 0s4.2 3.6 6.2 0s6.2-3.4 6.2 0s-4.2 3.6-6.2 0z" fill="none" stroke="#2a2a2a" stroke-width="1.7"/>
<path d="M1525.5 821.9a5 5 0 0 1 8.6-3.2M1535.1 823.1a5 5 0 0 1-8.6 3.2" fill="none" stroke="#2a2a2a" stroke-width="2"/>
<path d="M1532.5 820.9l3.6 0 0-3.8zM1528.1 824.1l-3.6 0 0 3.8z" fill="#2a2a2a"/>
<text x="1382.6" y="862" font-size="21.3" textLength="53" lengthAdjust="spacingAndGlyphs" fill="#2a2a2a" stroke="#2a2a2a" stroke-width="0.55">Back</text>
<text x="1489.4" y="862" font-size="21.3" textLength="54.2" lengthAdjust="spacingAndGlyphs" fill="#2a2a2a" stroke="#2a2a2a" stroke-width="0.55">Next</text>
<path d="M1356.2 849.2l-4.2 5 4.2 5M1361.2 849.2l-4.2 5 4.2 5M1566 849.2l4.2 5-4.2 5M1571 849.2l4.2 5-4.2 5" fill="none" stroke="#2c2c2c" stroke-width="1.4"/>
</svg>
</div>
</body></html>
